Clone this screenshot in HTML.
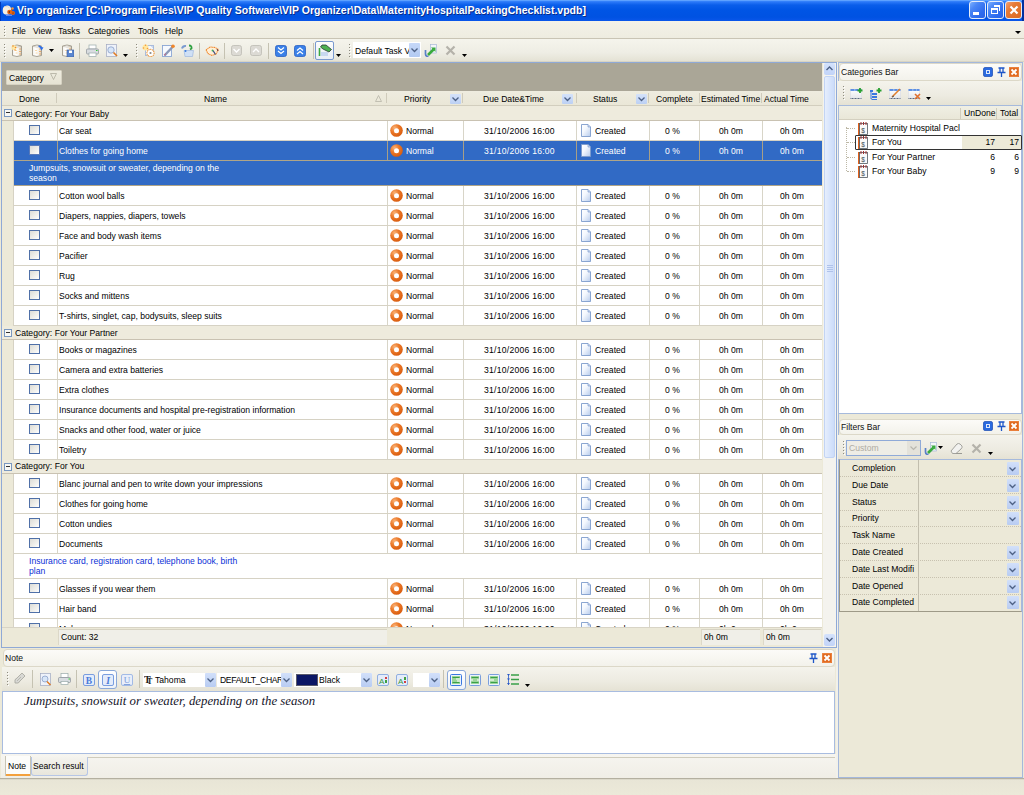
<!DOCTYPE html><html><head><meta charset="utf-8"><style>
*{margin:0;padding:0;box-sizing:border-box}
html,body{width:1024px;height:795px;overflow:hidden;background:#ECE9D8;font-family:"Liberation Sans",sans-serif;font-size:8.6px;color:#000}
.a{position:absolute}
.t{position:absolute;white-space:nowrap;line-height:10px}
</style></head><body>
<div class="a" style="left:0;top:0;width:1024px;height:21px;background:linear-gradient(#4A96FF 0px,#2A78F8 2px,#0A5EEA 5px,#0055E5 10px,#0052E2 17px,#0A56EA 21px)"></div>
<div class="a" style="left:0;top:0;width:1024px;height:1px;background:#5DA1FF"></div>
<div class="t" style="left:17px;top:4px;font-size:10.5px;font-weight:bold;color:#fff;line-height:13px;text-shadow:1px 1px 0 #0A2C8A">Vip organizer [C:\Program Files\VIP Quality Software\VIP Organizer\Data\MaternityHospitalPackingChecklist.vpdb]</div>
<svg class="a" style="left:1px;top:3px" width="15" height="14" viewBox="0 0 15 14"><path d="M2 5 Q3 2 7 2.5 Q10 3 10 6 L9 11 Q6 12.5 3 11 Q1 9 2 5Z" fill="#F4EEE2"/><path d="M4 3.5 Q7 3 8.5 5" stroke="#D8D2C4" stroke-width=".8" fill="none"/><rect x="5" y="11.5" width="6" height="1.5" fill="#6A8AE8"/><circle cx="8.5" cy="9" r="2.3" fill="#E8650F"/><circle cx="12" cy="10" r="2" fill="#E8650F"/><path d="M8.5 9 L12 10" stroke="#E8650F" stroke-width="2.5"/><circle cx="8.3" cy="9" r=".7" fill="#402010"/><circle cx="12" cy="10" r=".6" fill="#402010"/><circle cx="11.5" cy="5.5" r="1.3" fill="#F39A40"/><path d="M10 8 L11.5 6" stroke="#E8650F" stroke-width="1.2"/></svg>
<div class="a" style="left:969px;top:1px;width:17px;height:18px;border:1px solid #E4ECFA;border-radius:3px;background:linear-gradient(135deg,#7CB0FF 0%,#4A86F6 30%,#2F6CEE 70%,#2A62E4)"></div><div class="a" style="left:973px;top:12px;width:6px;height:3px;background:#fff"></div>
<div class="a" style="left:987px;top:1px;width:17px;height:18px;border:1px solid #E4ECFA;border-radius:3px;background:linear-gradient(135deg,#7CB0FF 0%,#4A86F6 30%,#2F6CEE 70%,#2A62E4)"></div><div class="a" style="left:994px;top:5px;width:6px;height:6px;border-top:2px solid #fff;border-right:1px solid #fff"></div><div class="a" style="left:991px;top:8px;width:7px;height:6px;border:1px solid #fff;border-top-width:2px"></div>
<div class="a" style="left:1005px;top:1px;width:17px;height:18px;border:1px solid #E4ECFA;border-radius:3px;background:linear-gradient(135deg,#F4A070 0%,#E67A36 35%,#DC6A22 100%)"></div><svg class="a" style="left:1009px;top:5px" width="10" height="10"><path d="M1.5 1.5L8.5 8.5M8.5 1.5L1.5 8.5" stroke="#fff" stroke-width="2.2"/></svg>
<div class="a" style="left:1022px;top:0;width:2px;height:21px;background:#0030A0"></div>
<div class="a" style="left:0;top:2px;width:1px;height:19px;background:#0038B8"></div>
<div class="a" style="left:0;top:21px;width:1024px;height:17px;background:linear-gradient(#F4F2E8,#EEECE0)"></div>
<div class="a" style="left:0;top:38px;width:1024px;height:1px;background:#C9C4B4"></div>
<div class="t" style="left:12px;top:26px">File</div>
<div class="t" style="left:33px;top:26px">View</div>
<div class="t" style="left:58px;top:26px">Tasks</div>
<div class="t" style="left:88px;top:26px">Categories</div>
<div class="t" style="left:138px;top:26px">Tools</div>
<div class="t" style="left:165px;top:26px">Help</div>
<svg class="a" style="left:1015px;top:31px" width="6" height="4"><path d="M0 0H6L3 3Z" fill="#000"/></svg>
<div class="a" style="left:0;top:39px;width:1024px;height:23px;background:linear-gradient(#F5F4EC,#EEEDE4 60%,#E3E1D3)"></div>
<div class="a" style="left:0;top:61px;width:1024px;height:1px;background:#D8D4C4"></div>
<div class="a" style="left:4px;top:26px;width:1px;height:1px;background:#8E8C80;box-shadow:1px 1px 0 #FFFFFF"></div><div class="a" style="left:4px;top:29px;width:1px;height:1px;background:#8E8C80;box-shadow:1px 1px 0 #FFFFFF"></div><div class="a" style="left:4px;top:32px;width:1px;height:1px;background:#8E8C80;box-shadow:1px 1px 0 #FFFFFF"></div><div class="a" style="left:4px;top:35px;width:1px;height:1px;background:#8E8C80;box-shadow:1px 1px 0 #FFFFFF"></div>
<div class="a" style="left:4px;top:44px;width:1px;height:1px;background:#8E8C80;box-shadow:1px 1px 0 #FFFFFF"></div><div class="a" style="left:4px;top:47px;width:1px;height:1px;background:#8E8C80;box-shadow:1px 1px 0 #FFFFFF"></div><div class="a" style="left:4px;top:50px;width:1px;height:1px;background:#8E8C80;box-shadow:1px 1px 0 #FFFFFF"></div><div class="a" style="left:4px;top:53px;width:1px;height:1px;background:#8E8C80;box-shadow:1px 1px 0 #FFFFFF"></div><div class="a" style="left:4px;top:56px;width:1px;height:1px;background:#8E8C80;box-shadow:1px 1px 0 #FFFFFF"></div>
<svg class="a" style="left:11px;top:44px" width="13" height="13" viewBox="0 0 13 13"><defs><linearGradient id="dbg" x1="0" x2="1"><stop offset="0" stop-color="#F2F0EA"/><stop offset=".35" stop-color="#FFFFFF"/><stop offset=".75" stop-color="#F2EEE4"/><stop offset="1" stop-color="#C8C4B8"/></linearGradient></defs><path d="M1.5 2 Q6 0 10.5 2 V11.5 Q6 13.5 1.5 11.5Z" fill="url(#dbg)" stroke="#9E988A" stroke-width=".9"/><path d="M1.8 2.3 Q6 4 10.2 2.3" stroke="#B8B2A4" stroke-width=".6" fill="none"/><path d="M9 4.5V5.5M9 7V8M9 9.5V10.5" stroke="#F08A2A" stroke-width="1.2"/><path d="M4 6.5H6M4.5 9H6.5" stroke="#F8D8A8" stroke-width="1"/><circle cx="3" cy="3.5" r="2.6" fill="#FFE8A0" opacity=".9"/><circle cx="2" cy="2" r=".8" fill="#F08A2A"/><circle cx="4.5" cy="3.5" r=".8" fill="#F08A2A"/><circle cx="4" cy="6" r=".7" fill="#F08A2A"/></svg>
<svg class="a" style="left:31px;top:44px" width="13" height="13" viewBox="0 0 13 13"><defs><linearGradient id="dbg" x1="0" x2="1"><stop offset="0" stop-color="#F2F0EA"/><stop offset=".35" stop-color="#FFFFFF"/><stop offset=".75" stop-color="#F2EEE4"/><stop offset="1" stop-color="#C8C4B8"/></linearGradient></defs><path d="M1.5 2 Q6 0 10.5 2 V11.5 Q6 13.5 1.5 11.5Z" fill="url(#dbg)" stroke="#9E988A" stroke-width=".9"/><path d="M1.8 2.3 Q6 4 10.2 2.3" stroke="#B8B2A4" stroke-width=".6" fill="none"/><path d="M9 4.5V5.5M9 7V8M9 9.5V10.5" stroke="#F08A2A" stroke-width="1.2"/><path d="M4 6.5H6M4.5 9H6.5" stroke="#F8D8A8" stroke-width="1"/><path d="M7.5 1.5 Q10 1 10.5 3 L12.5 3.5 L10.5 6.5 L9 4 Q8.5 3 7.5 3Z" fill="#2E6FE8"/></svg>
<svg class="a" style="left:49px;top:49px" width="5" height="3" viewBox="0 0 5 3"><path d="M0 0H5L2.5 3Z" fill="#000"/></svg>
<svg class="a" style="left:61px;top:44px" width="13" height="13" viewBox="0 0 13 13"><defs><linearGradient id="dbg" x1="0" x2="1"><stop offset="0" stop-color="#F2F0EA"/><stop offset=".35" stop-color="#FFFFFF"/><stop offset=".75" stop-color="#F2EEE4"/><stop offset="1" stop-color="#C8C4B8"/></linearGradient></defs><path d="M1.5 2 Q6 0 10.5 2 V11.5 Q6 13.5 1.5 11.5Z" fill="url(#dbg)" stroke="#9E988A" stroke-width=".9"/><path d="M1.8 2.3 Q6 4 10.2 2.3" stroke="#B8B2A4" stroke-width=".6" fill="none"/><path d="M9 4.5V5.5M9 7V8M9 9.5V10.5" stroke="#F08A2A" stroke-width="1.2"/><path d="M4 6.5H6M4.5 9H6.5" stroke="#F8D8A8" stroke-width="1"/><rect x="6" y="6" width="7" height="7" fill="#5A86D0" stroke="#3A5A9A" stroke-width=".6"/><rect x="8" y="6.5" width="3" height="2.5" fill="#fff"/></svg>
<div class="a" style="left:79px;top:43px;width:1px;height:16px;background:#C5C2B2"></div>
<svg class="a" style="left:86px;top:44px" width="13" height="13" viewBox="0 0 13 13"><rect x="3" y="1" width="7" height="4" fill="#fff" stroke="#9AA" stroke-width=".7"/><rect x="0.5" y="5" width="12" height="5" rx="1" fill="#D8DCE0" stroke="#8A9098" stroke-width=".7"/><rect x="3" y="9" width="7" height="3.5" fill="#fff" stroke="#9AA" stroke-width=".7"/><rect x="10" y="6" width="1.5" height="1" fill="#3C3"/></svg>
<svg class="a" style="left:106px;top:44px" width="12" height="13" viewBox="0 0 12 13"><rect x="0.5" y="0.5" width="10" height="12" fill="#EEF2FA" stroke="#A0A8C0" stroke-width=".7"/><circle cx="5" cy="6" r="3.2" fill="#D8E6F8" stroke="#8AA0C8" stroke-width=".8"/><path d="M7.5 8.5 L11 12" stroke="#E07A20" stroke-width="1.6"/></svg>
<svg class="a" style="left:123px;top:54px" width="5" height="3" viewBox="0 0 5 3"><path d="M0 0H5L2.5 3Z" fill="#000"/></svg>
<div class="a" style="left:136px;top:44px;width:1px;height:1px;background:#8E8C80;box-shadow:1px 1px 0 #FFFFFF"></div><div class="a" style="left:136px;top:47px;width:1px;height:1px;background:#8E8C80;box-shadow:1px 1px 0 #FFFFFF"></div><div class="a" style="left:136px;top:50px;width:1px;height:1px;background:#8E8C80;box-shadow:1px 1px 0 #FFFFFF"></div><div class="a" style="left:136px;top:53px;width:1px;height:1px;background:#8E8C80;box-shadow:1px 1px 0 #FFFFFF"></div><div class="a" style="left:136px;top:56px;width:1px;height:1px;background:#8E8C80;box-shadow:1px 1px 0 #FFFFFF"></div>
<svg class="a" style="left:142px;top:44px" width="14" height="13" viewBox="0 0 14 13"><rect x="3.5" y="1.5" width="8" height="10" fill="#F4F8FE" stroke="#9AB0D8" stroke-width=".8"/><path d="M9 1.5L11.5 4" stroke="#9AB0D8" stroke-width=".8"/><circle cx="3.5" cy="3.5" r="3" fill="#FFE7A0"/><circle cx="1.5" cy="4" r=".8" fill="#F39A3A"/><circle cx="3.5" cy="1.3" r=".8" fill="#F39A3A"/><circle cx="5.5" cy="4.5" r=".8" fill="#F39A3A"/><circle cx="8.5" cy="9" r="3.6" fill="#fff" stroke="#F0983A" stroke-width="1.1" stroke-dasharray="1.2 .6"/><circle cx="8.5" cy="9" r="1.1" fill="#8A8A8A"/></svg>
<svg class="a" style="left:161px;top:44px" width="14" height="13" viewBox="0 0 14 13"><rect x="1.5" y="1.5" width="9" height="11" fill="#F6F9FE" stroke="#8AA6D4" stroke-width=".9"/><path d="M3.5 11.5 L11.5 3" stroke="#8A98B8" stroke-width="2.4"/><path d="M3.5 11.5 L4.5 9.5" stroke="#D06080" stroke-width="1"/><circle cx="12" cy="2.3" r="1.8" fill="#F0862A"/></svg>
<svg class="a" style="left:181px;top:44px" width="14" height="13" viewBox="0 0 14 13"><path d="M1 4.5 Q2 1.5 5 2" stroke="#7A9AD0" stroke-width="2" fill="none"/><path d="M8 1.5 Q11 1.5 10.5 4.5 L9 5.5" stroke="#2EA040" stroke-width="1.8" fill="none"/><path d="M3 6.5 H12.5 L11.5 12.5 H4Z" fill="#CFE0F6" stroke="#9DB8E0" stroke-width=".7"/><circle cx="4.5" cy="7" r="1" fill="#3A7AE0"/></svg>
<div class="a" style="left:199px;top:43px;width:1px;height:16px;background:#C5C2B2"></div>
<svg class="a" style="left:205px;top:46px" width="14" height="10" viewBox="0 0 14 10"><path d="M1 4 L5 1 L10 1.5 L13.5 3.5 L11 8 L7 9.5 L3 7.5Z" fill="#FFF0D8" stroke="#F08A30" stroke-width="1.1" stroke-dasharray="1.3 .5"/><path d="M8 4.5 L10.5 8.5" stroke="#3A4A80" stroke-width="1.2"/><circle cx="7.5" cy="4.5" r=".9" fill="#40B060"/><path d="M12 3 L13 5" stroke="#603040" stroke-width="1"/></svg>
<div class="a" style="left:224px;top:43px;width:1px;height:16px;background:#C5C2B2"></div>
<svg class="a" style="left:231px;top:45px" width="11" height="11" viewBox="0 0 11 11"><rect x="0.5" y="0.5" width="10" height="10" rx="2" fill="#DCDAD4" stroke="#BDBBB4" stroke-width=".8"/><path d="M2.5 4 L5.5 7 L8.5 4" stroke="#fff" stroke-width="1.4" fill="none"/></svg>
<svg class="a" style="left:250px;top:45px" width="12" height="11" viewBox="0 0 12 11"><rect x="0.5" y="0.5" width="11" height="10" rx="2" fill="#DCDAD4" stroke="#BDBBB4" stroke-width=".8"/><path d="M3 7 L6 4 L9 7" stroke="#fff" stroke-width="1.4" fill="none"/></svg>
<div class="a" style="left:268px;top:43px;width:1px;height:16px;background:#C5C2B2"></div>
<svg class="a" style="left:275px;top:45px" width="12" height="12" viewBox="0 0 12 12"><rect x="0.5" y="0.5" width="11" height="11" rx="2" fill="#3A80E8" stroke="#2A60C0" stroke-width=".8"/><path d="M3 2.5L6 5L9 2.5M3 6L6 8.5L9 6" stroke="#fff" stroke-width="1.2" fill="none"/></svg>
<svg class="a" style="left:294px;top:45px" width="12" height="12" viewBox="0 0 12 12"><rect x="0.5" y="0.5" width="11" height="11" rx="2" fill="#3A80E8" stroke="#2A60C0" stroke-width=".8"/><path d="M3 5.5L6 3L9 5.5M3 9L6 6.5L9 9" stroke="#fff" stroke-width="1.2" fill="none"/></svg>
<div class="a" style="left:313px;top:43px;width:1px;height:16px;background:#C5C2B2"></div>
<div class="a" style="left:315px;top:41px;width:19px;height:19px;border:1px solid #7A9AD0;border-radius:2px;background:linear-gradient(#FDFDFB,#E8EEF6)"></div>
<svg class="a" style="left:318px;top:44px" width="14" height="13" viewBox="0 0 14 13"><rect x="3" y="8" width="7" height="4" fill="#C8D8F0"/><path d="M1.5 4V12" stroke="#3AA840" stroke-width="1.6"/><path d="M2.5 3 L4 1 H8 L13.5 5.5 L11 8 L8 6.5 L5 5Z" fill="#4CB050" stroke="#2A3A30" stroke-width=".8"/></svg>
<svg class="a" style="left:336px;top:54px" width="5" height="3" viewBox="0 0 5 3"><path d="M0 0H5L2.5 3Z" fill="#000"/></svg>
<div class="a" style="left:349px;top:44px;width:1px;height:1px;background:#8E8C80;box-shadow:1px 1px 0 #FFFFFF"></div><div class="a" style="left:349px;top:47px;width:1px;height:1px;background:#8E8C80;box-shadow:1px 1px 0 #FFFFFF"></div><div class="a" style="left:349px;top:50px;width:1px;height:1px;background:#8E8C80;box-shadow:1px 1px 0 #FFFFFF"></div><div class="a" style="left:349px;top:53px;width:1px;height:1px;background:#8E8C80;box-shadow:1px 1px 0 #FFFFFF"></div><div class="a" style="left:349px;top:56px;width:1px;height:1px;background:#8E8C80;box-shadow:1px 1px 0 #FFFFFF"></div>
<div class="a" style="left:353px;top:42px;width:68px;height:16px;background:#fff;border:1px solid #fff"></div>
<div class="t" style="left:355px;top:46px;width:54px;overflow:hidden">Default Task View</div>
<div class="a" style="left:409px;top:43px;width:11px;height:14px;background:linear-gradient(#C6D8F8,#B2CAF2);border-radius:1px"></div>
<svg class="a" style="left:411px;top:48px" width="7" height="5" viewBox="0 0 7 5"><path d="M0.5 0.5L3.5 3.5L6.5 0.5" stroke="#4D6185" stroke-width="1.3" fill="none"/></svg>
<svg class="a" style="left:424px;top:44px" width="14" height="13" viewBox="0 0 14 13"><rect x="6.5" y=".5" width="6" height="8.5" fill="#F2F5FA" stroke="#A8B8D8" stroke-width=".7"/><path d="M1.5 6V10Q1.5 12.5 4.5 12.5" stroke="#5A80C8" stroke-width="1.7" fill="none"/><path d="M4 11L9.5 5.5" stroke="#3AAA40" stroke-width="2.6"/><path d="M7 3.5H11.5V8Z" fill="#3AAA40"/></svg>
<svg class="a" style="left:445px;top:45px" width="11" height="11" viewBox="0 0 11 11"><path d="M1.5 1.5L9.5 9.5M9.5 1.5L1.5 9.5" stroke="#B4B2AA" stroke-width="2.2"/></svg>
<svg class="a" style="left:462px;top:54px" width="5" height="3" viewBox="0 0 5 3"><path d="M0 0H5L2.5 3Z" fill="#000"/></svg>
<div class="a" style="left:836px;top:62px;width:2px;height:716px;background:#F2F1EA"></div>
<div class="a" style="left:1px;top:62px;width:836px;height:586px;border:1px solid #8FA9D6;background:#ECE9D8"></div>
<div class="a" style="left:2px;top:63px;width:820px;height:28px;background:#AAA697"></div>
<div class="a" style="left:6px;top:70px;width:56px;height:15px;background:linear-gradient(#EEECDF,#E6E3D4);border:1px solid #D6D2C2;border-radius:1px"></div>
<div class="t" style="left:9px;top:73px">Category</div>
<svg class="a" style="left:50px;top:73px" width="7" height="7" viewBox="0 0 7 7"><path d="M0.5 0.5H6.5L3.5 6.5Z" fill="none" stroke="#B0AD9E" stroke-width=".8"/></svg>
<div class="a" style="left:2px;top:91px;width:820px;height:15px;background:linear-gradient(#EEECDF,#EAE7D7);border-bottom:1px solid #D2CEBE"></div>
<div class="a" style="left:56px;top:93px;width:1px;height:10px;background:#CFCBBB"></div>
<div class="a" style="left:386px;top:93px;width:1px;height:10px;background:#CFCBBB"></div>
<div class="a" style="left:462px;top:93px;width:1px;height:10px;background:#CFCBBB"></div>
<div class="a" style="left:576px;top:93px;width:1px;height:10px;background:#CFCBBB"></div>
<div class="a" style="left:648px;top:93px;width:1px;height:10px;background:#CFCBBB"></div>
<div class="a" style="left:699px;top:93px;width:1px;height:10px;background:#CFCBBB"></div>
<div class="a" style="left:761px;top:93px;width:1px;height:10px;background:#CFCBBB"></div>
<div class="t" style="left:19px;top:94px">Done</div>
<div class="t" style="left:204px;top:94px">Name</div>
<div class="t" style="left:404px;top:94px">Priority</div>
<div class="t" style="left:483px;top:94px">Due Date&amp;Time</div>
<div class="t" style="left:593px;top:94px">Status</div>
<div class="t" style="left:656px;top:94px">Complete</div>
<div class="t" style="left:701px;top:94px">Estimated Time</div>
<div class="t" style="left:764px;top:94px">Actual Time</div>
<svg class="a" style="left:375px;top:95px" width="7" height="7" viewBox="0 0 7 7"><path d="M3.5 0.5L6.5 6.5H0.5Z" fill="none" stroke="#B8B5A8" stroke-width=".8"/></svg>
<div class="a" style="left:450px;top:94px;width:11px;height:10px;background:linear-gradient(#D4E2FA,#BCD0F4);border-radius:1px"></div><svg class="a" style="left:452px;top:97px" width="7" height="5" viewBox="0 0 7 5"><path d="M0.5 0.5L3.5 3.5L6.5 0.5" stroke="#4D6185" stroke-width="1.3" fill="none"/></svg>
<div class="a" style="left:562px;top:94px;width:11px;height:10px;background:linear-gradient(#D4E2FA,#BCD0F4);border-radius:1px"></div><svg class="a" style="left:564px;top:97px" width="7" height="5" viewBox="0 0 7 5"><path d="M0.5 0.5L3.5 3.5L6.5 0.5" stroke="#4D6185" stroke-width="1.3" fill="none"/></svg>
<div class="a" style="left:636px;top:94px;width:11px;height:10px;background:linear-gradient(#D4E2FA,#BCD0F4);border-radius:1px"></div><svg class="a" style="left:638px;top:97px" width="7" height="5" viewBox="0 0 7 5"><path d="M0.5 0.5L3.5 3.5L6.5 0.5" stroke="#4D6185" stroke-width="1.3" fill="none"/></svg>
<div class="a" style="left:2px;top:105px;width:820px;height:522px;overflow:hidden">
<div class="a" style="left:-2px;top:-104px;width:1024px;height:795px">
<div class="a" style="left:2px;top:105px;width:820px;height:15px;background:#EEEBDD"></div><div class="a" style="left:2px;top:119px;width:820px;height:1px;background:#C9C2B2"></div><div class="a" style="left:4px;top:108px;width:8px;height:8px;border:1px solid #7A98C0;background:#F8F8F4"></div><div class="a" style="left:6px;top:111px;width:4px;height:1px;background:#333"></div><div class="t" style="left:15px;top:108px">Category: For Your Baby</div>
<div class="a" style="left:13px;top:120px;width:809px;height:19px;background:#fff"></div><div class="a" style="left:13px;top:139px;width:809px;height:1px;background:#D6D2C4"></div><div class="a" style="left:57px;top:120px;width:1px;height:19px;background:#D8D5C8"></div><div class="a" style="left:387px;top:120px;width:1px;height:19px;background:#D8D5C8"></div><div class="a" style="left:463px;top:120px;width:1px;height:19px;background:#D8D5C8"></div><div class="a" style="left:576px;top:120px;width:1px;height:19px;background:#D8D5C8"></div><div class="a" style="left:649px;top:120px;width:1px;height:19px;background:#D8D5C8"></div><div class="a" style="left:699px;top:120px;width:1px;height:19px;background:#D8D5C8"></div><div class="a" style="left:762px;top:120px;width:1px;height:19px;background:#D8D5C8"></div><div class="a" style="left:13px;top:120px;width:1px;height:20px;background:#D6D2C4"></div><div class="a" style="left:29px;top:124px;width:11px;height:10px;border:1px solid #4F70A8;background:linear-gradient(135deg,#DCDCD6,#F3F3F0 70%,#fff)"></div><div class="t" style="left:59px;top:125px;color:#000">Car seat</div><svg class="a" style="left:390px;top:123px" width="13" height="13" viewBox="0 0 13 13"><defs><radialGradient id="pg" cx="35%" cy="30%" r="75%"><stop offset="0" stop-color="#F9B47A"/><stop offset=".45" stop-color="#EC7A2A"/><stop offset="1" stop-color="#D85A0C"/></radialGradient></defs><circle cx="6.5" cy="6.5" r="6.3" fill="url(#pg)"/><circle cx="6.5" cy="6.7" r="2.5" fill="#fff"/></svg><div class="t" style="left:406px;top:125px;color:#000">Normal</div><div class="t" style="left:484px;top:125px;color:#000;letter-spacing:.25px">31/10/2006 16:00</div><svg class="a" style="left:581px;top:123px" width="10" height="13" viewBox="0 0 10 13"><defs><linearGradient id="dg" x1="0" y1="0" x2="1" y2="1"><stop offset="0" stop-color="#FFFFFF"/><stop offset=".4" stop-color="#F4F8FE"/><stop offset="1" stop-color="#B8CCEC"/></linearGradient></defs><path d="M0.5 0.5H7L9.5 3V12.5H0.5Z" fill="url(#dg)" stroke="#7E9CCC" stroke-width=".9"/><path d="M7 0.5V3H9.5" fill="#C8D8F0" stroke="#7E9CCC" stroke-width=".7"/></svg><div class="t" style="left:595px;top:125px;color:#000">Created</div><div class="t" style="left:665px;top:125px;color:#000">0 %</div><div class="t" style="left:719px;top:125px;color:#000">0h 0m</div><div class="t" style="left:780px;top:125px;color:#000">0h 0m</div>
<div class="a" style="left:13px;top:140px;width:809px;height:19px;background:#316AC5"></div><div class="a" style="left:13px;top:159px;width:809px;height:1px;background:#B0A587"></div><div class="a" style="left:57px;top:140px;width:1px;height:19px;background:#A89F86"></div><div class="a" style="left:387px;top:140px;width:1px;height:19px;background:#A89F86"></div><div class="a" style="left:463px;top:140px;width:1px;height:19px;background:#A89F86"></div><div class="a" style="left:576px;top:140px;width:1px;height:19px;background:#A89F86"></div><div class="a" style="left:649px;top:140px;width:1px;height:19px;background:#A89F86"></div><div class="a" style="left:699px;top:140px;width:1px;height:19px;background:#A89F86"></div><div class="a" style="left:762px;top:140px;width:1px;height:19px;background:#A89F86"></div><div class="a" style="left:13px;top:140px;width:1px;height:20px;background:#D6D2C4"></div><div class="a" style="left:29px;top:144px;width:11px;height:10px;border:1px solid #5A7AB8;background:linear-gradient(135deg,#DCDCD6,#F3F3F0 70%,#fff)"></div><div class="t" style="left:59px;top:145px;color:#fff">Clothes for going home</div><svg class="a" style="left:390px;top:143px" width="13" height="13" viewBox="0 0 13 13"><defs><radialGradient id="pg" cx="35%" cy="30%" r="75%"><stop offset="0" stop-color="#F9B47A"/><stop offset=".45" stop-color="#EC7A2A"/><stop offset="1" stop-color="#D85A0C"/></radialGradient></defs><circle cx="6.5" cy="6.5" r="6.3" fill="url(#pg)"/><circle cx="6.5" cy="6.7" r="2.5" fill="#fff"/></svg><div class="t" style="left:406px;top:145px;color:#fff">Normal</div><div class="t" style="left:484px;top:145px;color:#fff;letter-spacing:.25px">31/10/2006 16:00</div><svg class="a" style="left:581px;top:143px" width="10" height="13" viewBox="0 0 10 13"><defs><linearGradient id="dg" x1="0" y1="0" x2="1" y2="1"><stop offset="0" stop-color="#FFFFFF"/><stop offset=".4" stop-color="#F4F8FE"/><stop offset="1" stop-color="#B8CCEC"/></linearGradient></defs><path d="M0.5 0.5H7L9.5 3V12.5H0.5Z" fill="url(#dg)" stroke="#7E9CCC" stroke-width=".9"/><path d="M7 0.5V3H9.5" fill="#C8D8F0" stroke="#7E9CCC" stroke-width=".7"/></svg><div class="t" style="left:595px;top:145px;color:#fff">Created</div><div class="t" style="left:665px;top:145px;color:#fff">0 %</div><div class="t" style="left:719px;top:145px;color:#fff">0h 0m</div><div class="t" style="left:780px;top:145px;color:#fff">0h 0m</div>
<div class="a" style="left:13px;top:160px;width:809px;height:24px;background:#316AC5"></div><div class="a" style="left:13px;top:184px;width:809px;height:1px;background:#B0A587"></div><div class="a" style="left:13px;top:160px;width:1px;height:25px;background:#D6D2C4"></div><div class="t" style="left:29px;top:162px;color:#fff;line-height:10px">Jumpsuits, snowsuit or sweater, depending on the<br>season</div>
<div class="a" style="left:13px;top:185px;width:809px;height:19px;background:#fff"></div><div class="a" style="left:13px;top:204px;width:809px;height:1px;background:#D6D2C4"></div><div class="a" style="left:57px;top:185px;width:1px;height:19px;background:#D8D5C8"></div><div class="a" style="left:387px;top:185px;width:1px;height:19px;background:#D8D5C8"></div><div class="a" style="left:463px;top:185px;width:1px;height:19px;background:#D8D5C8"></div><div class="a" style="left:576px;top:185px;width:1px;height:19px;background:#D8D5C8"></div><div class="a" style="left:649px;top:185px;width:1px;height:19px;background:#D8D5C8"></div><div class="a" style="left:699px;top:185px;width:1px;height:19px;background:#D8D5C8"></div><div class="a" style="left:762px;top:185px;width:1px;height:19px;background:#D8D5C8"></div><div class="a" style="left:13px;top:185px;width:1px;height:20px;background:#D6D2C4"></div><div class="a" style="left:29px;top:189px;width:11px;height:10px;border:1px solid #4F70A8;background:linear-gradient(135deg,#DCDCD6,#F3F3F0 70%,#fff)"></div><div class="t" style="left:59px;top:190px;color:#000">Cotton wool balls</div><svg class="a" style="left:390px;top:188px" width="13" height="13" viewBox="0 0 13 13"><defs><radialGradient id="pg" cx="35%" cy="30%" r="75%"><stop offset="0" stop-color="#F9B47A"/><stop offset=".45" stop-color="#EC7A2A"/><stop offset="1" stop-color="#D85A0C"/></radialGradient></defs><circle cx="6.5" cy="6.5" r="6.3" fill="url(#pg)"/><circle cx="6.5" cy="6.7" r="2.5" fill="#fff"/></svg><div class="t" style="left:406px;top:190px;color:#000">Normal</div><div class="t" style="left:484px;top:190px;color:#000;letter-spacing:.25px">31/10/2006 16:00</div><svg class="a" style="left:581px;top:188px" width="10" height="13" viewBox="0 0 10 13"><defs><linearGradient id="dg" x1="0" y1="0" x2="1" y2="1"><stop offset="0" stop-color="#FFFFFF"/><stop offset=".4" stop-color="#F4F8FE"/><stop offset="1" stop-color="#B8CCEC"/></linearGradient></defs><path d="M0.5 0.5H7L9.5 3V12.5H0.5Z" fill="url(#dg)" stroke="#7E9CCC" stroke-width=".9"/><path d="M7 0.5V3H9.5" fill="#C8D8F0" stroke="#7E9CCC" stroke-width=".7"/></svg><div class="t" style="left:595px;top:190px;color:#000">Created</div><div class="t" style="left:665px;top:190px;color:#000">0 %</div><div class="t" style="left:719px;top:190px;color:#000">0h 0m</div><div class="t" style="left:780px;top:190px;color:#000">0h 0m</div>
<div class="a" style="left:13px;top:205px;width:809px;height:19px;background:#fff"></div><div class="a" style="left:13px;top:224px;width:809px;height:1px;background:#D6D2C4"></div><div class="a" style="left:57px;top:205px;width:1px;height:19px;background:#D8D5C8"></div><div class="a" style="left:387px;top:205px;width:1px;height:19px;background:#D8D5C8"></div><div class="a" style="left:463px;top:205px;width:1px;height:19px;background:#D8D5C8"></div><div class="a" style="left:576px;top:205px;width:1px;height:19px;background:#D8D5C8"></div><div class="a" style="left:649px;top:205px;width:1px;height:19px;background:#D8D5C8"></div><div class="a" style="left:699px;top:205px;width:1px;height:19px;background:#D8D5C8"></div><div class="a" style="left:762px;top:205px;width:1px;height:19px;background:#D8D5C8"></div><div class="a" style="left:13px;top:205px;width:1px;height:20px;background:#D6D2C4"></div><div class="a" style="left:29px;top:209px;width:11px;height:10px;border:1px solid #4F70A8;background:linear-gradient(135deg,#DCDCD6,#F3F3F0 70%,#fff)"></div><div class="t" style="left:59px;top:210px;color:#000">Diapers, nappies, diapers, towels</div><svg class="a" style="left:390px;top:208px" width="13" height="13" viewBox="0 0 13 13"><defs><radialGradient id="pg" cx="35%" cy="30%" r="75%"><stop offset="0" stop-color="#F9B47A"/><stop offset=".45" stop-color="#EC7A2A"/><stop offset="1" stop-color="#D85A0C"/></radialGradient></defs><circle cx="6.5" cy="6.5" r="6.3" fill="url(#pg)"/><circle cx="6.5" cy="6.7" r="2.5" fill="#fff"/></svg><div class="t" style="left:406px;top:210px;color:#000">Normal</div><div class="t" style="left:484px;top:210px;color:#000;letter-spacing:.25px">31/10/2006 16:00</div><svg class="a" style="left:581px;top:208px" width="10" height="13" viewBox="0 0 10 13"><defs><linearGradient id="dg" x1="0" y1="0" x2="1" y2="1"><stop offset="0" stop-color="#FFFFFF"/><stop offset=".4" stop-color="#F4F8FE"/><stop offset="1" stop-color="#B8CCEC"/></linearGradient></defs><path d="M0.5 0.5H7L9.5 3V12.5H0.5Z" fill="url(#dg)" stroke="#7E9CCC" stroke-width=".9"/><path d="M7 0.5V3H9.5" fill="#C8D8F0" stroke="#7E9CCC" stroke-width=".7"/></svg><div class="t" style="left:595px;top:210px;color:#000">Created</div><div class="t" style="left:665px;top:210px;color:#000">0 %</div><div class="t" style="left:719px;top:210px;color:#000">0h 0m</div><div class="t" style="left:780px;top:210px;color:#000">0h 0m</div>
<div class="a" style="left:13px;top:225px;width:809px;height:19px;background:#fff"></div><div class="a" style="left:13px;top:244px;width:809px;height:1px;background:#D6D2C4"></div><div class="a" style="left:57px;top:225px;width:1px;height:19px;background:#D8D5C8"></div><div class="a" style="left:387px;top:225px;width:1px;height:19px;background:#D8D5C8"></div><div class="a" style="left:463px;top:225px;width:1px;height:19px;background:#D8D5C8"></div><div class="a" style="left:576px;top:225px;width:1px;height:19px;background:#D8D5C8"></div><div class="a" style="left:649px;top:225px;width:1px;height:19px;background:#D8D5C8"></div><div class="a" style="left:699px;top:225px;width:1px;height:19px;background:#D8D5C8"></div><div class="a" style="left:762px;top:225px;width:1px;height:19px;background:#D8D5C8"></div><div class="a" style="left:13px;top:225px;width:1px;height:20px;background:#D6D2C4"></div><div class="a" style="left:29px;top:229px;width:11px;height:10px;border:1px solid #4F70A8;background:linear-gradient(135deg,#DCDCD6,#F3F3F0 70%,#fff)"></div><div class="t" style="left:59px;top:230px;color:#000">Face and body wash items</div><svg class="a" style="left:390px;top:228px" width="13" height="13" viewBox="0 0 13 13"><defs><radialGradient id="pg" cx="35%" cy="30%" r="75%"><stop offset="0" stop-color="#F9B47A"/><stop offset=".45" stop-color="#EC7A2A"/><stop offset="1" stop-color="#D85A0C"/></radialGradient></defs><circle cx="6.5" cy="6.5" r="6.3" fill="url(#pg)"/><circle cx="6.5" cy="6.7" r="2.5" fill="#fff"/></svg><div class="t" style="left:406px;top:230px;color:#000">Normal</div><div class="t" style="left:484px;top:230px;color:#000;letter-spacing:.25px">31/10/2006 16:00</div><svg class="a" style="left:581px;top:228px" width="10" height="13" viewBox="0 0 10 13"><defs><linearGradient id="dg" x1="0" y1="0" x2="1" y2="1"><stop offset="0" stop-color="#FFFFFF"/><stop offset=".4" stop-color="#F4F8FE"/><stop offset="1" stop-color="#B8CCEC"/></linearGradient></defs><path d="M0.5 0.5H7L9.5 3V12.5H0.5Z" fill="url(#dg)" stroke="#7E9CCC" stroke-width=".9"/><path d="M7 0.5V3H9.5" fill="#C8D8F0" stroke="#7E9CCC" stroke-width=".7"/></svg><div class="t" style="left:595px;top:230px;color:#000">Created</div><div class="t" style="left:665px;top:230px;color:#000">0 %</div><div class="t" style="left:719px;top:230px;color:#000">0h 0m</div><div class="t" style="left:780px;top:230px;color:#000">0h 0m</div>
<div class="a" style="left:13px;top:245px;width:809px;height:19px;background:#fff"></div><div class="a" style="left:13px;top:264px;width:809px;height:1px;background:#D6D2C4"></div><div class="a" style="left:57px;top:245px;width:1px;height:19px;background:#D8D5C8"></div><div class="a" style="left:387px;top:245px;width:1px;height:19px;background:#D8D5C8"></div><div class="a" style="left:463px;top:245px;width:1px;height:19px;background:#D8D5C8"></div><div class="a" style="left:576px;top:245px;width:1px;height:19px;background:#D8D5C8"></div><div class="a" style="left:649px;top:245px;width:1px;height:19px;background:#D8D5C8"></div><div class="a" style="left:699px;top:245px;width:1px;height:19px;background:#D8D5C8"></div><div class="a" style="left:762px;top:245px;width:1px;height:19px;background:#D8D5C8"></div><div class="a" style="left:13px;top:245px;width:1px;height:20px;background:#D6D2C4"></div><div class="a" style="left:29px;top:249px;width:11px;height:10px;border:1px solid #4F70A8;background:linear-gradient(135deg,#DCDCD6,#F3F3F0 70%,#fff)"></div><div class="t" style="left:59px;top:250px;color:#000">Pacifier</div><svg class="a" style="left:390px;top:248px" width="13" height="13" viewBox="0 0 13 13"><defs><radialGradient id="pg" cx="35%" cy="30%" r="75%"><stop offset="0" stop-color="#F9B47A"/><stop offset=".45" stop-color="#EC7A2A"/><stop offset="1" stop-color="#D85A0C"/></radialGradient></defs><circle cx="6.5" cy="6.5" r="6.3" fill="url(#pg)"/><circle cx="6.5" cy="6.7" r="2.5" fill="#fff"/></svg><div class="t" style="left:406px;top:250px;color:#000">Normal</div><div class="t" style="left:484px;top:250px;color:#000;letter-spacing:.25px">31/10/2006 16:00</div><svg class="a" style="left:581px;top:248px" width="10" height="13" viewBox="0 0 10 13"><defs><linearGradient id="dg" x1="0" y1="0" x2="1" y2="1"><stop offset="0" stop-color="#FFFFFF"/><stop offset=".4" stop-color="#F4F8FE"/><stop offset="1" stop-color="#B8CCEC"/></linearGradient></defs><path d="M0.5 0.5H7L9.5 3V12.5H0.5Z" fill="url(#dg)" stroke="#7E9CCC" stroke-width=".9"/><path d="M7 0.5V3H9.5" fill="#C8D8F0" stroke="#7E9CCC" stroke-width=".7"/></svg><div class="t" style="left:595px;top:250px;color:#000">Created</div><div class="t" style="left:665px;top:250px;color:#000">0 %</div><div class="t" style="left:719px;top:250px;color:#000">0h 0m</div><div class="t" style="left:780px;top:250px;color:#000">0h 0m</div>
<div class="a" style="left:13px;top:265px;width:809px;height:19px;background:#fff"></div><div class="a" style="left:13px;top:284px;width:809px;height:1px;background:#D6D2C4"></div><div class="a" style="left:57px;top:265px;width:1px;height:19px;background:#D8D5C8"></div><div class="a" style="left:387px;top:265px;width:1px;height:19px;background:#D8D5C8"></div><div class="a" style="left:463px;top:265px;width:1px;height:19px;background:#D8D5C8"></div><div class="a" style="left:576px;top:265px;width:1px;height:19px;background:#D8D5C8"></div><div class="a" style="left:649px;top:265px;width:1px;height:19px;background:#D8D5C8"></div><div class="a" style="left:699px;top:265px;width:1px;height:19px;background:#D8D5C8"></div><div class="a" style="left:762px;top:265px;width:1px;height:19px;background:#D8D5C8"></div><div class="a" style="left:13px;top:265px;width:1px;height:20px;background:#D6D2C4"></div><div class="a" style="left:29px;top:269px;width:11px;height:10px;border:1px solid #4F70A8;background:linear-gradient(135deg,#DCDCD6,#F3F3F0 70%,#fff)"></div><div class="t" style="left:59px;top:270px;color:#000">Rug</div><svg class="a" style="left:390px;top:268px" width="13" height="13" viewBox="0 0 13 13"><defs><radialGradient id="pg" cx="35%" cy="30%" r="75%"><stop offset="0" stop-color="#F9B47A"/><stop offset=".45" stop-color="#EC7A2A"/><stop offset="1" stop-color="#D85A0C"/></radialGradient></defs><circle cx="6.5" cy="6.5" r="6.3" fill="url(#pg)"/><circle cx="6.5" cy="6.7" r="2.5" fill="#fff"/></svg><div class="t" style="left:406px;top:270px;color:#000">Normal</div><div class="t" style="left:484px;top:270px;color:#000;letter-spacing:.25px">31/10/2006 16:00</div><svg class="a" style="left:581px;top:268px" width="10" height="13" viewBox="0 0 10 13"><defs><linearGradient id="dg" x1="0" y1="0" x2="1" y2="1"><stop offset="0" stop-color="#FFFFFF"/><stop offset=".4" stop-color="#F4F8FE"/><stop offset="1" stop-color="#B8CCEC"/></linearGradient></defs><path d="M0.5 0.5H7L9.5 3V12.5H0.5Z" fill="url(#dg)" stroke="#7E9CCC" stroke-width=".9"/><path d="M7 0.5V3H9.5" fill="#C8D8F0" stroke="#7E9CCC" stroke-width=".7"/></svg><div class="t" style="left:595px;top:270px;color:#000">Created</div><div class="t" style="left:665px;top:270px;color:#000">0 %</div><div class="t" style="left:719px;top:270px;color:#000">0h 0m</div><div class="t" style="left:780px;top:270px;color:#000">0h 0m</div>
<div class="a" style="left:13px;top:285px;width:809px;height:19px;background:#fff"></div><div class="a" style="left:13px;top:304px;width:809px;height:1px;background:#D6D2C4"></div><div class="a" style="left:57px;top:285px;width:1px;height:19px;background:#D8D5C8"></div><div class="a" style="left:387px;top:285px;width:1px;height:19px;background:#D8D5C8"></div><div class="a" style="left:463px;top:285px;width:1px;height:19px;background:#D8D5C8"></div><div class="a" style="left:576px;top:285px;width:1px;height:19px;background:#D8D5C8"></div><div class="a" style="left:649px;top:285px;width:1px;height:19px;background:#D8D5C8"></div><div class="a" style="left:699px;top:285px;width:1px;height:19px;background:#D8D5C8"></div><div class="a" style="left:762px;top:285px;width:1px;height:19px;background:#D8D5C8"></div><div class="a" style="left:13px;top:285px;width:1px;height:20px;background:#D6D2C4"></div><div class="a" style="left:29px;top:289px;width:11px;height:10px;border:1px solid #4F70A8;background:linear-gradient(135deg,#DCDCD6,#F3F3F0 70%,#fff)"></div><div class="t" style="left:59px;top:290px;color:#000">Socks and mittens</div><svg class="a" style="left:390px;top:288px" width="13" height="13" viewBox="0 0 13 13"><defs><radialGradient id="pg" cx="35%" cy="30%" r="75%"><stop offset="0" stop-color="#F9B47A"/><stop offset=".45" stop-color="#EC7A2A"/><stop offset="1" stop-color="#D85A0C"/></radialGradient></defs><circle cx="6.5" cy="6.5" r="6.3" fill="url(#pg)"/><circle cx="6.5" cy="6.7" r="2.5" fill="#fff"/></svg><div class="t" style="left:406px;top:290px;color:#000">Normal</div><div class="t" style="left:484px;top:290px;color:#000;letter-spacing:.25px">31/10/2006 16:00</div><svg class="a" style="left:581px;top:288px" width="10" height="13" viewBox="0 0 10 13"><defs><linearGradient id="dg" x1="0" y1="0" x2="1" y2="1"><stop offset="0" stop-color="#FFFFFF"/><stop offset=".4" stop-color="#F4F8FE"/><stop offset="1" stop-color="#B8CCEC"/></linearGradient></defs><path d="M0.5 0.5H7L9.5 3V12.5H0.5Z" fill="url(#dg)" stroke="#7E9CCC" stroke-width=".9"/><path d="M7 0.5V3H9.5" fill="#C8D8F0" stroke="#7E9CCC" stroke-width=".7"/></svg><div class="t" style="left:595px;top:290px;color:#000">Created</div><div class="t" style="left:665px;top:290px;color:#000">0 %</div><div class="t" style="left:719px;top:290px;color:#000">0h 0m</div><div class="t" style="left:780px;top:290px;color:#000">0h 0m</div>
<div class="a" style="left:13px;top:305px;width:809px;height:19px;background:#fff"></div><div class="a" style="left:13px;top:324px;width:809px;height:1px;background:#D6D2C4"></div><div class="a" style="left:57px;top:305px;width:1px;height:19px;background:#D8D5C8"></div><div class="a" style="left:387px;top:305px;width:1px;height:19px;background:#D8D5C8"></div><div class="a" style="left:463px;top:305px;width:1px;height:19px;background:#D8D5C8"></div><div class="a" style="left:576px;top:305px;width:1px;height:19px;background:#D8D5C8"></div><div class="a" style="left:649px;top:305px;width:1px;height:19px;background:#D8D5C8"></div><div class="a" style="left:699px;top:305px;width:1px;height:19px;background:#D8D5C8"></div><div class="a" style="left:762px;top:305px;width:1px;height:19px;background:#D8D5C8"></div><div class="a" style="left:13px;top:305px;width:1px;height:20px;background:#D6D2C4"></div><div class="a" style="left:29px;top:309px;width:11px;height:10px;border:1px solid #4F70A8;background:linear-gradient(135deg,#DCDCD6,#F3F3F0 70%,#fff)"></div><div class="t" style="left:59px;top:310px;color:#000">T-shirts, singlet, cap, bodysuits, sleep suits</div><svg class="a" style="left:390px;top:308px" width="13" height="13" viewBox="0 0 13 13"><defs><radialGradient id="pg" cx="35%" cy="30%" r="75%"><stop offset="0" stop-color="#F9B47A"/><stop offset=".45" stop-color="#EC7A2A"/><stop offset="1" stop-color="#D85A0C"/></radialGradient></defs><circle cx="6.5" cy="6.5" r="6.3" fill="url(#pg)"/><circle cx="6.5" cy="6.7" r="2.5" fill="#fff"/></svg><div class="t" style="left:406px;top:310px;color:#000">Normal</div><div class="t" style="left:484px;top:310px;color:#000;letter-spacing:.25px">31/10/2006 16:00</div><svg class="a" style="left:581px;top:308px" width="10" height="13" viewBox="0 0 10 13"><defs><linearGradient id="dg" x1="0" y1="0" x2="1" y2="1"><stop offset="0" stop-color="#FFFFFF"/><stop offset=".4" stop-color="#F4F8FE"/><stop offset="1" stop-color="#B8CCEC"/></linearGradient></defs><path d="M0.5 0.5H7L9.5 3V12.5H0.5Z" fill="url(#dg)" stroke="#7E9CCC" stroke-width=".9"/><path d="M7 0.5V3H9.5" fill="#C8D8F0" stroke="#7E9CCC" stroke-width=".7"/></svg><div class="t" style="left:595px;top:310px;color:#000">Created</div><div class="t" style="left:665px;top:310px;color:#000">0 %</div><div class="t" style="left:719px;top:310px;color:#000">0h 0m</div><div class="t" style="left:780px;top:310px;color:#000">0h 0m</div>
<div class="a" style="left:2px;top:325px;width:820px;height:14px;background:#EEEBDD"></div><div class="a" style="left:2px;top:338px;width:820px;height:1px;background:#C9C2B2"></div><div class="a" style="left:4px;top:328px;width:8px;height:8px;border:1px solid #7A98C0;background:#F8F8F4"></div><div class="a" style="left:6px;top:331px;width:4px;height:1px;background:#333"></div><div class="t" style="left:15px;top:327px">Category: For Your Partner</div>
<div class="a" style="left:13px;top:339px;width:809px;height:19px;background:#fff"></div><div class="a" style="left:13px;top:358px;width:809px;height:1px;background:#D6D2C4"></div><div class="a" style="left:57px;top:339px;width:1px;height:19px;background:#D8D5C8"></div><div class="a" style="left:387px;top:339px;width:1px;height:19px;background:#D8D5C8"></div><div class="a" style="left:463px;top:339px;width:1px;height:19px;background:#D8D5C8"></div><div class="a" style="left:576px;top:339px;width:1px;height:19px;background:#D8D5C8"></div><div class="a" style="left:649px;top:339px;width:1px;height:19px;background:#D8D5C8"></div><div class="a" style="left:699px;top:339px;width:1px;height:19px;background:#D8D5C8"></div><div class="a" style="left:762px;top:339px;width:1px;height:19px;background:#D8D5C8"></div><div class="a" style="left:13px;top:339px;width:1px;height:20px;background:#D6D2C4"></div><div class="a" style="left:29px;top:343px;width:11px;height:10px;border:1px solid #4F70A8;background:linear-gradient(135deg,#DCDCD6,#F3F3F0 70%,#fff)"></div><div class="t" style="left:59px;top:344px;color:#000">Books or magazines</div><svg class="a" style="left:390px;top:342px" width="13" height="13" viewBox="0 0 13 13"><defs><radialGradient id="pg" cx="35%" cy="30%" r="75%"><stop offset="0" stop-color="#F9B47A"/><stop offset=".45" stop-color="#EC7A2A"/><stop offset="1" stop-color="#D85A0C"/></radialGradient></defs><circle cx="6.5" cy="6.5" r="6.3" fill="url(#pg)"/><circle cx="6.5" cy="6.7" r="2.5" fill="#fff"/></svg><div class="t" style="left:406px;top:344px;color:#000">Normal</div><div class="t" style="left:484px;top:344px;color:#000;letter-spacing:.25px">31/10/2006 16:00</div><svg class="a" style="left:581px;top:342px" width="10" height="13" viewBox="0 0 10 13"><defs><linearGradient id="dg" x1="0" y1="0" x2="1" y2="1"><stop offset="0" stop-color="#FFFFFF"/><stop offset=".4" stop-color="#F4F8FE"/><stop offset="1" stop-color="#B8CCEC"/></linearGradient></defs><path d="M0.5 0.5H7L9.5 3V12.5H0.5Z" fill="url(#dg)" stroke="#7E9CCC" stroke-width=".9"/><path d="M7 0.5V3H9.5" fill="#C8D8F0" stroke="#7E9CCC" stroke-width=".7"/></svg><div class="t" style="left:595px;top:344px;color:#000">Created</div><div class="t" style="left:665px;top:344px;color:#000">0 %</div><div class="t" style="left:719px;top:344px;color:#000">0h 0m</div><div class="t" style="left:780px;top:344px;color:#000">0h 0m</div>
<div class="a" style="left:13px;top:359px;width:809px;height:19px;background:#fff"></div><div class="a" style="left:13px;top:378px;width:809px;height:1px;background:#D6D2C4"></div><div class="a" style="left:57px;top:359px;width:1px;height:19px;background:#D8D5C8"></div><div class="a" style="left:387px;top:359px;width:1px;height:19px;background:#D8D5C8"></div><div class="a" style="left:463px;top:359px;width:1px;height:19px;background:#D8D5C8"></div><div class="a" style="left:576px;top:359px;width:1px;height:19px;background:#D8D5C8"></div><div class="a" style="left:649px;top:359px;width:1px;height:19px;background:#D8D5C8"></div><div class="a" style="left:699px;top:359px;width:1px;height:19px;background:#D8D5C8"></div><div class="a" style="left:762px;top:359px;width:1px;height:19px;background:#D8D5C8"></div><div class="a" style="left:13px;top:359px;width:1px;height:20px;background:#D6D2C4"></div><div class="a" style="left:29px;top:363px;width:11px;height:10px;border:1px solid #4F70A8;background:linear-gradient(135deg,#DCDCD6,#F3F3F0 70%,#fff)"></div><div class="t" style="left:59px;top:364px;color:#000">Camera and extra batteries</div><svg class="a" style="left:390px;top:362px" width="13" height="13" viewBox="0 0 13 13"><defs><radialGradient id="pg" cx="35%" cy="30%" r="75%"><stop offset="0" stop-color="#F9B47A"/><stop offset=".45" stop-color="#EC7A2A"/><stop offset="1" stop-color="#D85A0C"/></radialGradient></defs><circle cx="6.5" cy="6.5" r="6.3" fill="url(#pg)"/><circle cx="6.5" cy="6.7" r="2.5" fill="#fff"/></svg><div class="t" style="left:406px;top:364px;color:#000">Normal</div><div class="t" style="left:484px;top:364px;color:#000;letter-spacing:.25px">31/10/2006 16:00</div><svg class="a" style="left:581px;top:362px" width="10" height="13" viewBox="0 0 10 13"><defs><linearGradient id="dg" x1="0" y1="0" x2="1" y2="1"><stop offset="0" stop-color="#FFFFFF"/><stop offset=".4" stop-color="#F4F8FE"/><stop offset="1" stop-color="#B8CCEC"/></linearGradient></defs><path d="M0.5 0.5H7L9.5 3V12.5H0.5Z" fill="url(#dg)" stroke="#7E9CCC" stroke-width=".9"/><path d="M7 0.5V3H9.5" fill="#C8D8F0" stroke="#7E9CCC" stroke-width=".7"/></svg><div class="t" style="left:595px;top:364px;color:#000">Created</div><div class="t" style="left:665px;top:364px;color:#000">0 %</div><div class="t" style="left:719px;top:364px;color:#000">0h 0m</div><div class="t" style="left:780px;top:364px;color:#000">0h 0m</div>
<div class="a" style="left:13px;top:379px;width:809px;height:19px;background:#fff"></div><div class="a" style="left:13px;top:398px;width:809px;height:1px;background:#D6D2C4"></div><div class="a" style="left:57px;top:379px;width:1px;height:19px;background:#D8D5C8"></div><div class="a" style="left:387px;top:379px;width:1px;height:19px;background:#D8D5C8"></div><div class="a" style="left:463px;top:379px;width:1px;height:19px;background:#D8D5C8"></div><div class="a" style="left:576px;top:379px;width:1px;height:19px;background:#D8D5C8"></div><div class="a" style="left:649px;top:379px;width:1px;height:19px;background:#D8D5C8"></div><div class="a" style="left:699px;top:379px;width:1px;height:19px;background:#D8D5C8"></div><div class="a" style="left:762px;top:379px;width:1px;height:19px;background:#D8D5C8"></div><div class="a" style="left:13px;top:379px;width:1px;height:20px;background:#D6D2C4"></div><div class="a" style="left:29px;top:383px;width:11px;height:10px;border:1px solid #4F70A8;background:linear-gradient(135deg,#DCDCD6,#F3F3F0 70%,#fff)"></div><div class="t" style="left:59px;top:384px;color:#000">Extra clothes</div><svg class="a" style="left:390px;top:382px" width="13" height="13" viewBox="0 0 13 13"><defs><radialGradient id="pg" cx="35%" cy="30%" r="75%"><stop offset="0" stop-color="#F9B47A"/><stop offset=".45" stop-color="#EC7A2A"/><stop offset="1" stop-color="#D85A0C"/></radialGradient></defs><circle cx="6.5" cy="6.5" r="6.3" fill="url(#pg)"/><circle cx="6.5" cy="6.7" r="2.5" fill="#fff"/></svg><div class="t" style="left:406px;top:384px;color:#000">Normal</div><div class="t" style="left:484px;top:384px;color:#000;letter-spacing:.25px">31/10/2006 16:00</div><svg class="a" style="left:581px;top:382px" width="10" height="13" viewBox="0 0 10 13"><defs><linearGradient id="dg" x1="0" y1="0" x2="1" y2="1"><stop offset="0" stop-color="#FFFFFF"/><stop offset=".4" stop-color="#F4F8FE"/><stop offset="1" stop-color="#B8CCEC"/></linearGradient></defs><path d="M0.5 0.5H7L9.5 3V12.5H0.5Z" fill="url(#dg)" stroke="#7E9CCC" stroke-width=".9"/><path d="M7 0.5V3H9.5" fill="#C8D8F0" stroke="#7E9CCC" stroke-width=".7"/></svg><div class="t" style="left:595px;top:384px;color:#000">Created</div><div class="t" style="left:665px;top:384px;color:#000">0 %</div><div class="t" style="left:719px;top:384px;color:#000">0h 0m</div><div class="t" style="left:780px;top:384px;color:#000">0h 0m</div>
<div class="a" style="left:13px;top:399px;width:809px;height:19px;background:#fff"></div><div class="a" style="left:13px;top:418px;width:809px;height:1px;background:#D6D2C4"></div><div class="a" style="left:57px;top:399px;width:1px;height:19px;background:#D8D5C8"></div><div class="a" style="left:387px;top:399px;width:1px;height:19px;background:#D8D5C8"></div><div class="a" style="left:463px;top:399px;width:1px;height:19px;background:#D8D5C8"></div><div class="a" style="left:576px;top:399px;width:1px;height:19px;background:#D8D5C8"></div><div class="a" style="left:649px;top:399px;width:1px;height:19px;background:#D8D5C8"></div><div class="a" style="left:699px;top:399px;width:1px;height:19px;background:#D8D5C8"></div><div class="a" style="left:762px;top:399px;width:1px;height:19px;background:#D8D5C8"></div><div class="a" style="left:13px;top:399px;width:1px;height:20px;background:#D6D2C4"></div><div class="a" style="left:29px;top:403px;width:11px;height:10px;border:1px solid #4F70A8;background:linear-gradient(135deg,#DCDCD6,#F3F3F0 70%,#fff)"></div><div class="t" style="left:59px;top:404px;color:#000">Insurance documents and hospital pre-registration information</div><svg class="a" style="left:390px;top:402px" width="13" height="13" viewBox="0 0 13 13"><defs><radialGradient id="pg" cx="35%" cy="30%" r="75%"><stop offset="0" stop-color="#F9B47A"/><stop offset=".45" stop-color="#EC7A2A"/><stop offset="1" stop-color="#D85A0C"/></radialGradient></defs><circle cx="6.5" cy="6.5" r="6.3" fill="url(#pg)"/><circle cx="6.5" cy="6.7" r="2.5" fill="#fff"/></svg><div class="t" style="left:406px;top:404px;color:#000">Normal</div><div class="t" style="left:484px;top:404px;color:#000;letter-spacing:.25px">31/10/2006 16:00</div><svg class="a" style="left:581px;top:402px" width="10" height="13" viewBox="0 0 10 13"><defs><linearGradient id="dg" x1="0" y1="0" x2="1" y2="1"><stop offset="0" stop-color="#FFFFFF"/><stop offset=".4" stop-color="#F4F8FE"/><stop offset="1" stop-color="#B8CCEC"/></linearGradient></defs><path d="M0.5 0.5H7L9.5 3V12.5H0.5Z" fill="url(#dg)" stroke="#7E9CCC" stroke-width=".9"/><path d="M7 0.5V3H9.5" fill="#C8D8F0" stroke="#7E9CCC" stroke-width=".7"/></svg><div class="t" style="left:595px;top:404px;color:#000">Created</div><div class="t" style="left:665px;top:404px;color:#000">0 %</div><div class="t" style="left:719px;top:404px;color:#000">0h 0m</div><div class="t" style="left:780px;top:404px;color:#000">0h 0m</div>
<div class="a" style="left:13px;top:419px;width:809px;height:19px;background:#fff"></div><div class="a" style="left:13px;top:438px;width:809px;height:1px;background:#D6D2C4"></div><div class="a" style="left:57px;top:419px;width:1px;height:19px;background:#D8D5C8"></div><div class="a" style="left:387px;top:419px;width:1px;height:19px;background:#D8D5C8"></div><div class="a" style="left:463px;top:419px;width:1px;height:19px;background:#D8D5C8"></div><div class="a" style="left:576px;top:419px;width:1px;height:19px;background:#D8D5C8"></div><div class="a" style="left:649px;top:419px;width:1px;height:19px;background:#D8D5C8"></div><div class="a" style="left:699px;top:419px;width:1px;height:19px;background:#D8D5C8"></div><div class="a" style="left:762px;top:419px;width:1px;height:19px;background:#D8D5C8"></div><div class="a" style="left:13px;top:419px;width:1px;height:20px;background:#D6D2C4"></div><div class="a" style="left:29px;top:423px;width:11px;height:10px;border:1px solid #4F70A8;background:linear-gradient(135deg,#DCDCD6,#F3F3F0 70%,#fff)"></div><div class="t" style="left:59px;top:424px;color:#000">Snacks and other food, water or juice</div><svg class="a" style="left:390px;top:422px" width="13" height="13" viewBox="0 0 13 13"><defs><radialGradient id="pg" cx="35%" cy="30%" r="75%"><stop offset="0" stop-color="#F9B47A"/><stop offset=".45" stop-color="#EC7A2A"/><stop offset="1" stop-color="#D85A0C"/></radialGradient></defs><circle cx="6.5" cy="6.5" r="6.3" fill="url(#pg)"/><circle cx="6.5" cy="6.7" r="2.5" fill="#fff"/></svg><div class="t" style="left:406px;top:424px;color:#000">Normal</div><div class="t" style="left:484px;top:424px;color:#000;letter-spacing:.25px">31/10/2006 16:00</div><svg class="a" style="left:581px;top:422px" width="10" height="13" viewBox="0 0 10 13"><defs><linearGradient id="dg" x1="0" y1="0" x2="1" y2="1"><stop offset="0" stop-color="#FFFFFF"/><stop offset=".4" stop-color="#F4F8FE"/><stop offset="1" stop-color="#B8CCEC"/></linearGradient></defs><path d="M0.5 0.5H7L9.5 3V12.5H0.5Z" fill="url(#dg)" stroke="#7E9CCC" stroke-width=".9"/><path d="M7 0.5V3H9.5" fill="#C8D8F0" stroke="#7E9CCC" stroke-width=".7"/></svg><div class="t" style="left:595px;top:424px;color:#000">Created</div><div class="t" style="left:665px;top:424px;color:#000">0 %</div><div class="t" style="left:719px;top:424px;color:#000">0h 0m</div><div class="t" style="left:780px;top:424px;color:#000">0h 0m</div>
<div class="a" style="left:13px;top:439px;width:809px;height:19px;background:#fff"></div><div class="a" style="left:13px;top:458px;width:809px;height:1px;background:#D6D2C4"></div><div class="a" style="left:57px;top:439px;width:1px;height:19px;background:#D8D5C8"></div><div class="a" style="left:387px;top:439px;width:1px;height:19px;background:#D8D5C8"></div><div class="a" style="left:463px;top:439px;width:1px;height:19px;background:#D8D5C8"></div><div class="a" style="left:576px;top:439px;width:1px;height:19px;background:#D8D5C8"></div><div class="a" style="left:649px;top:439px;width:1px;height:19px;background:#D8D5C8"></div><div class="a" style="left:699px;top:439px;width:1px;height:19px;background:#D8D5C8"></div><div class="a" style="left:762px;top:439px;width:1px;height:19px;background:#D8D5C8"></div><div class="a" style="left:13px;top:439px;width:1px;height:20px;background:#D6D2C4"></div><div class="a" style="left:29px;top:443px;width:11px;height:10px;border:1px solid #4F70A8;background:linear-gradient(135deg,#DCDCD6,#F3F3F0 70%,#fff)"></div><div class="t" style="left:59px;top:444px;color:#000">Toiletry</div><svg class="a" style="left:390px;top:442px" width="13" height="13" viewBox="0 0 13 13"><defs><radialGradient id="pg" cx="35%" cy="30%" r="75%"><stop offset="0" stop-color="#F9B47A"/><stop offset=".45" stop-color="#EC7A2A"/><stop offset="1" stop-color="#D85A0C"/></radialGradient></defs><circle cx="6.5" cy="6.5" r="6.3" fill="url(#pg)"/><circle cx="6.5" cy="6.7" r="2.5" fill="#fff"/></svg><div class="t" style="left:406px;top:444px;color:#000">Normal</div><div class="t" style="left:484px;top:444px;color:#000;letter-spacing:.25px">31/10/2006 16:00</div><svg class="a" style="left:581px;top:442px" width="10" height="13" viewBox="0 0 10 13"><defs><linearGradient id="dg" x1="0" y1="0" x2="1" y2="1"><stop offset="0" stop-color="#FFFFFF"/><stop offset=".4" stop-color="#F4F8FE"/><stop offset="1" stop-color="#B8CCEC"/></linearGradient></defs><path d="M0.5 0.5H7L9.5 3V12.5H0.5Z" fill="url(#dg)" stroke="#7E9CCC" stroke-width=".9"/><path d="M7 0.5V3H9.5" fill="#C8D8F0" stroke="#7E9CCC" stroke-width=".7"/></svg><div class="t" style="left:595px;top:444px;color:#000">Created</div><div class="t" style="left:665px;top:444px;color:#000">0 %</div><div class="t" style="left:719px;top:444px;color:#000">0h 0m</div><div class="t" style="left:780px;top:444px;color:#000">0h 0m</div>
<div class="a" style="left:2px;top:459px;width:820px;height:14px;background:#EEEBDD"></div><div class="a" style="left:2px;top:472px;width:820px;height:1px;background:#C9C2B2"></div><div class="a" style="left:4px;top:462px;width:8px;height:8px;border:1px solid #7A98C0;background:#F8F8F4"></div><div class="a" style="left:6px;top:465px;width:4px;height:1px;background:#333"></div><div class="t" style="left:15px;top:460px">Category: For You</div>
<div class="a" style="left:13px;top:473px;width:809px;height:19px;background:#fff"></div><div class="a" style="left:13px;top:492px;width:809px;height:1px;background:#D6D2C4"></div><div class="a" style="left:57px;top:473px;width:1px;height:19px;background:#D8D5C8"></div><div class="a" style="left:387px;top:473px;width:1px;height:19px;background:#D8D5C8"></div><div class="a" style="left:463px;top:473px;width:1px;height:19px;background:#D8D5C8"></div><div class="a" style="left:576px;top:473px;width:1px;height:19px;background:#D8D5C8"></div><div class="a" style="left:649px;top:473px;width:1px;height:19px;background:#D8D5C8"></div><div class="a" style="left:699px;top:473px;width:1px;height:19px;background:#D8D5C8"></div><div class="a" style="left:762px;top:473px;width:1px;height:19px;background:#D8D5C8"></div><div class="a" style="left:13px;top:473px;width:1px;height:20px;background:#D6D2C4"></div><div class="a" style="left:29px;top:477px;width:11px;height:10px;border:1px solid #4F70A8;background:linear-gradient(135deg,#DCDCD6,#F3F3F0 70%,#fff)"></div><div class="t" style="left:59px;top:478px;color:#000">Blanc journal and pen to write down your impressions</div><svg class="a" style="left:390px;top:476px" width="13" height="13" viewBox="0 0 13 13"><defs><radialGradient id="pg" cx="35%" cy="30%" r="75%"><stop offset="0" stop-color="#F9B47A"/><stop offset=".45" stop-color="#EC7A2A"/><stop offset="1" stop-color="#D85A0C"/></radialGradient></defs><circle cx="6.5" cy="6.5" r="6.3" fill="url(#pg)"/><circle cx="6.5" cy="6.7" r="2.5" fill="#fff"/></svg><div class="t" style="left:406px;top:478px;color:#000">Normal</div><div class="t" style="left:484px;top:478px;color:#000;letter-spacing:.25px">31/10/2006 16:00</div><svg class="a" style="left:581px;top:476px" width="10" height="13" viewBox="0 0 10 13"><defs><linearGradient id="dg" x1="0" y1="0" x2="1" y2="1"><stop offset="0" stop-color="#FFFFFF"/><stop offset=".4" stop-color="#F4F8FE"/><stop offset="1" stop-color="#B8CCEC"/></linearGradient></defs><path d="M0.5 0.5H7L9.5 3V12.5H0.5Z" fill="url(#dg)" stroke="#7E9CCC" stroke-width=".9"/><path d="M7 0.5V3H9.5" fill="#C8D8F0" stroke="#7E9CCC" stroke-width=".7"/></svg><div class="t" style="left:595px;top:478px;color:#000">Created</div><div class="t" style="left:665px;top:478px;color:#000">0 %</div><div class="t" style="left:719px;top:478px;color:#000">0h 0m</div><div class="t" style="left:780px;top:478px;color:#000">0h 0m</div>
<div class="a" style="left:13px;top:493px;width:809px;height:19px;background:#fff"></div><div class="a" style="left:13px;top:512px;width:809px;height:1px;background:#D6D2C4"></div><div class="a" style="left:57px;top:493px;width:1px;height:19px;background:#D8D5C8"></div><div class="a" style="left:387px;top:493px;width:1px;height:19px;background:#D8D5C8"></div><div class="a" style="left:463px;top:493px;width:1px;height:19px;background:#D8D5C8"></div><div class="a" style="left:576px;top:493px;width:1px;height:19px;background:#D8D5C8"></div><div class="a" style="left:649px;top:493px;width:1px;height:19px;background:#D8D5C8"></div><div class="a" style="left:699px;top:493px;width:1px;height:19px;background:#D8D5C8"></div><div class="a" style="left:762px;top:493px;width:1px;height:19px;background:#D8D5C8"></div><div class="a" style="left:13px;top:493px;width:1px;height:20px;background:#D6D2C4"></div><div class="a" style="left:29px;top:497px;width:11px;height:10px;border:1px solid #4F70A8;background:linear-gradient(135deg,#DCDCD6,#F3F3F0 70%,#fff)"></div><div class="t" style="left:59px;top:498px;color:#000">Clothes for going home</div><svg class="a" style="left:390px;top:496px" width="13" height="13" viewBox="0 0 13 13"><defs><radialGradient id="pg" cx="35%" cy="30%" r="75%"><stop offset="0" stop-color="#F9B47A"/><stop offset=".45" stop-color="#EC7A2A"/><stop offset="1" stop-color="#D85A0C"/></radialGradient></defs><circle cx="6.5" cy="6.5" r="6.3" fill="url(#pg)"/><circle cx="6.5" cy="6.7" r="2.5" fill="#fff"/></svg><div class="t" style="left:406px;top:498px;color:#000">Normal</div><div class="t" style="left:484px;top:498px;color:#000;letter-spacing:.25px">31/10/2006 16:00</div><svg class="a" style="left:581px;top:496px" width="10" height="13" viewBox="0 0 10 13"><defs><linearGradient id="dg" x1="0" y1="0" x2="1" y2="1"><stop offset="0" stop-color="#FFFFFF"/><stop offset=".4" stop-color="#F4F8FE"/><stop offset="1" stop-color="#B8CCEC"/></linearGradient></defs><path d="M0.5 0.5H7L9.5 3V12.5H0.5Z" fill="url(#dg)" stroke="#7E9CCC" stroke-width=".9"/><path d="M7 0.5V3H9.5" fill="#C8D8F0" stroke="#7E9CCC" stroke-width=".7"/></svg><div class="t" style="left:595px;top:498px;color:#000">Created</div><div class="t" style="left:665px;top:498px;color:#000">0 %</div><div class="t" style="left:719px;top:498px;color:#000">0h 0m</div><div class="t" style="left:780px;top:498px;color:#000">0h 0m</div>
<div class="a" style="left:13px;top:513px;width:809px;height:19px;background:#fff"></div><div class="a" style="left:13px;top:532px;width:809px;height:1px;background:#D6D2C4"></div><div class="a" style="left:57px;top:513px;width:1px;height:19px;background:#D8D5C8"></div><div class="a" style="left:387px;top:513px;width:1px;height:19px;background:#D8D5C8"></div><div class="a" style="left:463px;top:513px;width:1px;height:19px;background:#D8D5C8"></div><div class="a" style="left:576px;top:513px;width:1px;height:19px;background:#D8D5C8"></div><div class="a" style="left:649px;top:513px;width:1px;height:19px;background:#D8D5C8"></div><div class="a" style="left:699px;top:513px;width:1px;height:19px;background:#D8D5C8"></div><div class="a" style="left:762px;top:513px;width:1px;height:19px;background:#D8D5C8"></div><div class="a" style="left:13px;top:513px;width:1px;height:20px;background:#D6D2C4"></div><div class="a" style="left:29px;top:517px;width:11px;height:10px;border:1px solid #4F70A8;background:linear-gradient(135deg,#DCDCD6,#F3F3F0 70%,#fff)"></div><div class="t" style="left:59px;top:518px;color:#000">Cotton undies</div><svg class="a" style="left:390px;top:516px" width="13" height="13" viewBox="0 0 13 13"><defs><radialGradient id="pg" cx="35%" cy="30%" r="75%"><stop offset="0" stop-color="#F9B47A"/><stop offset=".45" stop-color="#EC7A2A"/><stop offset="1" stop-color="#D85A0C"/></radialGradient></defs><circle cx="6.5" cy="6.5" r="6.3" fill="url(#pg)"/><circle cx="6.5" cy="6.7" r="2.5" fill="#fff"/></svg><div class="t" style="left:406px;top:518px;color:#000">Normal</div><div class="t" style="left:484px;top:518px;color:#000;letter-spacing:.25px">31/10/2006 16:00</div><svg class="a" style="left:581px;top:516px" width="10" height="13" viewBox="0 0 10 13"><defs><linearGradient id="dg" x1="0" y1="0" x2="1" y2="1"><stop offset="0" stop-color="#FFFFFF"/><stop offset=".4" stop-color="#F4F8FE"/><stop offset="1" stop-color="#B8CCEC"/></linearGradient></defs><path d="M0.5 0.5H7L9.5 3V12.5H0.5Z" fill="url(#dg)" stroke="#7E9CCC" stroke-width=".9"/><path d="M7 0.5V3H9.5" fill="#C8D8F0" stroke="#7E9CCC" stroke-width=".7"/></svg><div class="t" style="left:595px;top:518px;color:#000">Created</div><div class="t" style="left:665px;top:518px;color:#000">0 %</div><div class="t" style="left:719px;top:518px;color:#000">0h 0m</div><div class="t" style="left:780px;top:518px;color:#000">0h 0m</div>
<div class="a" style="left:13px;top:533px;width:809px;height:19px;background:#fff"></div><div class="a" style="left:13px;top:552px;width:809px;height:1px;background:#D6D2C4"></div><div class="a" style="left:57px;top:533px;width:1px;height:19px;background:#D8D5C8"></div><div class="a" style="left:387px;top:533px;width:1px;height:19px;background:#D8D5C8"></div><div class="a" style="left:463px;top:533px;width:1px;height:19px;background:#D8D5C8"></div><div class="a" style="left:576px;top:533px;width:1px;height:19px;background:#D8D5C8"></div><div class="a" style="left:649px;top:533px;width:1px;height:19px;background:#D8D5C8"></div><div class="a" style="left:699px;top:533px;width:1px;height:19px;background:#D8D5C8"></div><div class="a" style="left:762px;top:533px;width:1px;height:19px;background:#D8D5C8"></div><div class="a" style="left:13px;top:533px;width:1px;height:20px;background:#D6D2C4"></div><div class="a" style="left:29px;top:537px;width:11px;height:10px;border:1px solid #4F70A8;background:linear-gradient(135deg,#DCDCD6,#F3F3F0 70%,#fff)"></div><div class="t" style="left:59px;top:538px;color:#000">Documents</div><svg class="a" style="left:390px;top:536px" width="13" height="13" viewBox="0 0 13 13"><defs><radialGradient id="pg" cx="35%" cy="30%" r="75%"><stop offset="0" stop-color="#F9B47A"/><stop offset=".45" stop-color="#EC7A2A"/><stop offset="1" stop-color="#D85A0C"/></radialGradient></defs><circle cx="6.5" cy="6.5" r="6.3" fill="url(#pg)"/><circle cx="6.5" cy="6.7" r="2.5" fill="#fff"/></svg><div class="t" style="left:406px;top:538px;color:#000">Normal</div><div class="t" style="left:484px;top:538px;color:#000;letter-spacing:.25px">31/10/2006 16:00</div><svg class="a" style="left:581px;top:536px" width="10" height="13" viewBox="0 0 10 13"><defs><linearGradient id="dg" x1="0" y1="0" x2="1" y2="1"><stop offset="0" stop-color="#FFFFFF"/><stop offset=".4" stop-color="#F4F8FE"/><stop offset="1" stop-color="#B8CCEC"/></linearGradient></defs><path d="M0.5 0.5H7L9.5 3V12.5H0.5Z" fill="url(#dg)" stroke="#7E9CCC" stroke-width=".9"/><path d="M7 0.5V3H9.5" fill="#C8D8F0" stroke="#7E9CCC" stroke-width=".7"/></svg><div class="t" style="left:595px;top:538px;color:#000">Created</div><div class="t" style="left:665px;top:538px;color:#000">0 %</div><div class="t" style="left:719px;top:538px;color:#000">0h 0m</div><div class="t" style="left:780px;top:538px;color:#000">0h 0m</div>
<div class="a" style="left:13px;top:553px;width:809px;height:24px;background:#fff"></div><div class="a" style="left:13px;top:577px;width:809px;height:1px;background:#D6D2C4"></div><div class="a" style="left:13px;top:553px;width:1px;height:25px;background:#D6D2C4"></div><div class="t" style="left:29px;top:555px;color:#0B2FD6;line-height:10px">Insurance card, registration card, telephone book, birth<br>plan</div>
<div class="a" style="left:13px;top:578px;width:809px;height:19px;background:#fff"></div><div class="a" style="left:13px;top:597px;width:809px;height:1px;background:#D6D2C4"></div><div class="a" style="left:57px;top:578px;width:1px;height:19px;background:#D8D5C8"></div><div class="a" style="left:387px;top:578px;width:1px;height:19px;background:#D8D5C8"></div><div class="a" style="left:463px;top:578px;width:1px;height:19px;background:#D8D5C8"></div><div class="a" style="left:576px;top:578px;width:1px;height:19px;background:#D8D5C8"></div><div class="a" style="left:649px;top:578px;width:1px;height:19px;background:#D8D5C8"></div><div class="a" style="left:699px;top:578px;width:1px;height:19px;background:#D8D5C8"></div><div class="a" style="left:762px;top:578px;width:1px;height:19px;background:#D8D5C8"></div><div class="a" style="left:13px;top:578px;width:1px;height:20px;background:#D6D2C4"></div><div class="a" style="left:29px;top:582px;width:11px;height:10px;border:1px solid #4F70A8;background:linear-gradient(135deg,#DCDCD6,#F3F3F0 70%,#fff)"></div><div class="t" style="left:59px;top:583px;color:#000">Glasses if you wear them</div><svg class="a" style="left:390px;top:581px" width="13" height="13" viewBox="0 0 13 13"><defs><radialGradient id="pg" cx="35%" cy="30%" r="75%"><stop offset="0" stop-color="#F9B47A"/><stop offset=".45" stop-color="#EC7A2A"/><stop offset="1" stop-color="#D85A0C"/></radialGradient></defs><circle cx="6.5" cy="6.5" r="6.3" fill="url(#pg)"/><circle cx="6.5" cy="6.7" r="2.5" fill="#fff"/></svg><div class="t" style="left:406px;top:583px;color:#000">Normal</div><div class="t" style="left:484px;top:583px;color:#000;letter-spacing:.25px">31/10/2006 16:00</div><svg class="a" style="left:581px;top:581px" width="10" height="13" viewBox="0 0 10 13"><defs><linearGradient id="dg" x1="0" y1="0" x2="1" y2="1"><stop offset="0" stop-color="#FFFFFF"/><stop offset=".4" stop-color="#F4F8FE"/><stop offset="1" stop-color="#B8CCEC"/></linearGradient></defs><path d="M0.5 0.5H7L9.5 3V12.5H0.5Z" fill="url(#dg)" stroke="#7E9CCC" stroke-width=".9"/><path d="M7 0.5V3H9.5" fill="#C8D8F0" stroke="#7E9CCC" stroke-width=".7"/></svg><div class="t" style="left:595px;top:583px;color:#000">Created</div><div class="t" style="left:665px;top:583px;color:#000">0 %</div><div class="t" style="left:719px;top:583px;color:#000">0h 0m</div><div class="t" style="left:780px;top:583px;color:#000">0h 0m</div>
<div class="a" style="left:13px;top:598px;width:809px;height:19px;background:#fff"></div><div class="a" style="left:13px;top:617px;width:809px;height:1px;background:#D6D2C4"></div><div class="a" style="left:57px;top:598px;width:1px;height:19px;background:#D8D5C8"></div><div class="a" style="left:387px;top:598px;width:1px;height:19px;background:#D8D5C8"></div><div class="a" style="left:463px;top:598px;width:1px;height:19px;background:#D8D5C8"></div><div class="a" style="left:576px;top:598px;width:1px;height:19px;background:#D8D5C8"></div><div class="a" style="left:649px;top:598px;width:1px;height:19px;background:#D8D5C8"></div><div class="a" style="left:699px;top:598px;width:1px;height:19px;background:#D8D5C8"></div><div class="a" style="left:762px;top:598px;width:1px;height:19px;background:#D8D5C8"></div><div class="a" style="left:13px;top:598px;width:1px;height:20px;background:#D6D2C4"></div><div class="a" style="left:29px;top:602px;width:11px;height:10px;border:1px solid #4F70A8;background:linear-gradient(135deg,#DCDCD6,#F3F3F0 70%,#fff)"></div><div class="t" style="left:59px;top:603px;color:#000">Hair band</div><svg class="a" style="left:390px;top:601px" width="13" height="13" viewBox="0 0 13 13"><defs><radialGradient id="pg" cx="35%" cy="30%" r="75%"><stop offset="0" stop-color="#F9B47A"/><stop offset=".45" stop-color="#EC7A2A"/><stop offset="1" stop-color="#D85A0C"/></radialGradient></defs><circle cx="6.5" cy="6.5" r="6.3" fill="url(#pg)"/><circle cx="6.5" cy="6.7" r="2.5" fill="#fff"/></svg><div class="t" style="left:406px;top:603px;color:#000">Normal</div><div class="t" style="left:484px;top:603px;color:#000;letter-spacing:.25px">31/10/2006 16:00</div><svg class="a" style="left:581px;top:601px" width="10" height="13" viewBox="0 0 10 13"><defs><linearGradient id="dg" x1="0" y1="0" x2="1" y2="1"><stop offset="0" stop-color="#FFFFFF"/><stop offset=".4" stop-color="#F4F8FE"/><stop offset="1" stop-color="#B8CCEC"/></linearGradient></defs><path d="M0.5 0.5H7L9.5 3V12.5H0.5Z" fill="url(#dg)" stroke="#7E9CCC" stroke-width=".9"/><path d="M7 0.5V3H9.5" fill="#C8D8F0" stroke="#7E9CCC" stroke-width=".7"/></svg><div class="t" style="left:595px;top:603px;color:#000">Created</div><div class="t" style="left:665px;top:603px;color:#000">0 %</div><div class="t" style="left:719px;top:603px;color:#000">0h 0m</div><div class="t" style="left:780px;top:603px;color:#000">0h 0m</div>
<div class="a" style="left:13px;top:618px;width:809px;height:19px;background:#fff"></div><div class="a" style="left:13px;top:637px;width:809px;height:1px;background:#D6D2C4"></div><div class="a" style="left:57px;top:618px;width:1px;height:19px;background:#D8D5C8"></div><div class="a" style="left:387px;top:618px;width:1px;height:19px;background:#D8D5C8"></div><div class="a" style="left:463px;top:618px;width:1px;height:19px;background:#D8D5C8"></div><div class="a" style="left:576px;top:618px;width:1px;height:19px;background:#D8D5C8"></div><div class="a" style="left:649px;top:618px;width:1px;height:19px;background:#D8D5C8"></div><div class="a" style="left:699px;top:618px;width:1px;height:19px;background:#D8D5C8"></div><div class="a" style="left:762px;top:618px;width:1px;height:19px;background:#D8D5C8"></div><div class="a" style="left:13px;top:618px;width:1px;height:20px;background:#D6D2C4"></div><div class="a" style="left:29px;top:622px;width:11px;height:10px;border:1px solid #4F70A8;background:linear-gradient(135deg,#DCDCD6,#F3F3F0 70%,#fff)"></div><div class="t" style="left:59px;top:623px;color:#000">Make-up</div><svg class="a" style="left:390px;top:621px" width="13" height="13" viewBox="0 0 13 13"><defs><radialGradient id="pg" cx="35%" cy="30%" r="75%"><stop offset="0" stop-color="#F9B47A"/><stop offset=".45" stop-color="#EC7A2A"/><stop offset="1" stop-color="#D85A0C"/></radialGradient></defs><circle cx="6.5" cy="6.5" r="6.3" fill="url(#pg)"/><circle cx="6.5" cy="6.7" r="2.5" fill="#fff"/></svg><div class="t" style="left:406px;top:623px;color:#000">Normal</div><div class="t" style="left:484px;top:623px;color:#000;letter-spacing:.25px">31/10/2006 16:00</div><svg class="a" style="left:581px;top:621px" width="10" height="13" viewBox="0 0 10 13"><defs><linearGradient id="dg" x1="0" y1="0" x2="1" y2="1"><stop offset="0" stop-color="#FFFFFF"/><stop offset=".4" stop-color="#F4F8FE"/><stop offset="1" stop-color="#B8CCEC"/></linearGradient></defs><path d="M0.5 0.5H7L9.5 3V12.5H0.5Z" fill="url(#dg)" stroke="#7E9CCC" stroke-width=".9"/><path d="M7 0.5V3H9.5" fill="#C8D8F0" stroke="#7E9CCC" stroke-width=".7"/></svg><div class="t" style="left:595px;top:623px;color:#000">Created</div><div class="t" style="left:665px;top:623px;color:#000">0 %</div><div class="t" style="left:719px;top:623px;color:#000">0h 0m</div><div class="t" style="left:780px;top:623px;color:#000">0h 0m</div>
</div></div>
<div class="a" style="left:2px;top:627px;width:820px;height:20px;background:#ECE9D8;border-top:1px solid #D8D4C6"></div>
<div class="a" style="left:58px;top:629px;width:329px;height:16px;background:#F0EFE8;border-top:1px solid #D6D2C2;border-left:1px solid #DCD8C8"></div>
<div class="t" style="left:61px;top:632px">Count: 32</div>
<div class="a" style="left:701px;top:629px;width:59px;height:16px;background:#F0EFE8;border-top:1px solid #D6D2C2;border-left:1px solid #DCD8C8"></div>
<div class="t" style="left:704px;top:632px">0h 0m</div>
<div class="a" style="left:763px;top:629px;width:58px;height:16px;background:#F0EFE8;border-top:1px solid #D6D2C2;border-left:1px solid #DCD8C8"></div>
<div class="t" style="left:766px;top:632px">0h 0m</div>
<div class="a" style="left:823px;top:63px;width:13px;height:584px;background:#F4F3EE"></div>
<div class="a" style="left:824px;top:63px;width:11px;height:12px;background:linear-gradient(#D4E2FC,#C2D4F8);border-radius:2px"></div>
<svg class="a" style="left:826px;top:66px" width="7" height="5" viewBox="0 0 7 5"><path d="M0.5 4L3.5 1L6.5 4" stroke="#4D6185" stroke-width="1.4" fill="none"/></svg>
<div class="a" style="left:824px;top:76px;width:11px;height:382px;background:linear-gradient(90deg,#E6EEFC,#D8E5FC 50%,#CCDCF9);border:1px solid #C2D4F4;border-radius:2px"></div>
<div class="a" style="left:827px;top:265px;width:6px;height:1px;background:#AFC2EA"></div>
<div class="a" style="left:827px;top:267px;width:6px;height:1px;background:#AFC2EA"></div>
<div class="a" style="left:827px;top:269px;width:6px;height:1px;background:#AFC2EA"></div>
<div class="a" style="left:827px;top:271px;width:6px;height:1px;background:#AFC2EA"></div>
<div class="a" style="left:824px;top:634px;width:11px;height:12px;background:linear-gradient(#D4E2FC,#C2D4F8);border-radius:2px"></div>
<svg class="a" style="left:826px;top:637px" width="7" height="5" viewBox="0 0 7 5"><path d="M0.5 1L3.5 4L6.5 1" stroke="#4D6185" stroke-width="1.4" fill="none"/></svg>
<div class="a" style="left:1px;top:648px;width:835px;height:130px;background:#ECE9D8"></div>
<div class="a" style="left:3px;top:649px;width:832px;height:18px;background:linear-gradient(#FCFBF8,#F3F2EB);border:1px solid #DCD8C8;border-radius:4px"></div><div class="t" style="left:5px;top:653px;color:#111">Note</div>
<svg class="a" style="left:809px;top:653px" width="9" height="10" viewBox="0 0 9 10"><path d="M1.5 1H7.5M3 1V5M6 1V5M0.5 5.5H8.5M4.5 5.5V10" stroke="#1E56C8" stroke-width="1.3" fill="none"/></svg>
<svg class="a" style="left:822px;top:653px" width="10" height="10" viewBox="0 0 10 10"><rect width="10" height="10" fill="#E06A20"/><rect x=".5" y=".5" width="9" height="9" fill="none" stroke="#F09050" stroke-width=".6"/><path d="M2.5 2.5L7.5 7.5M7.5 2.5L2.5 7.5" stroke="#fff" stroke-width="1.8"/></svg>
<div class="a" style="left:2px;top:667px;width:833px;height:24px;background:linear-gradient(#F4F3EC,#EDEBE1 60%,#E5E2D4)"></div>
<div class="a" style="left:7px;top:672px;width:1px;height:1px;background:#8E8C80;box-shadow:1px 1px 0 #FFFFFF"></div><div class="a" style="left:7px;top:675px;width:1px;height:1px;background:#8E8C80;box-shadow:1px 1px 0 #FFFFFF"></div><div class="a" style="left:7px;top:678px;width:1px;height:1px;background:#8E8C80;box-shadow:1px 1px 0 #FFFFFF"></div><div class="a" style="left:7px;top:681px;width:1px;height:1px;background:#8E8C80;box-shadow:1px 1px 0 #FFFFFF"></div><div class="a" style="left:7px;top:684px;width:1px;height:1px;background:#8E8C80;box-shadow:1px 1px 0 #FFFFFF"></div>
<svg class="a" style="left:13px;top:672px" width="13" height="13" viewBox="0 0 13 13"><path d="M2 11 Q1 7 4 6 L9 1 L12 4 L7 9 Q6 12 2 11Z" fill="#D8D8D4" stroke="#A4A49C" stroke-width=".8"/><path d="M4 9 L8 5" stroke="#B8B8B0" stroke-width="1"/></svg>
<div class="a" style="left:32px;top:670px;width:1px;height:18px;background:#C5C2B2"></div>
<svg class="a" style="left:40px;top:673px" width="12" height="13" viewBox="0 0 12 13"><rect x="0.5" y="0.5" width="10" height="12" fill="#EEF2FA" stroke="#A0A8C0" stroke-width=".7"/><circle cx="5" cy="6" r="3" fill="#D8E6F8" stroke="#8AA0C8" stroke-width=".8"/><path d="M7 8.5 L10.5 12" stroke="#E07A20" stroke-width="1.5"/></svg>
<svg class="a" style="left:58px;top:673px" width="13" height="12" viewBox="0 0 13 12"><rect x="3" y=".5" width="7" height="4" fill="#fff" stroke="#9AA" stroke-width=".7"/><rect x="0.5" y="4.5" width="12" height="5" rx="1" fill="#D8DCE0" stroke="#8A9098" stroke-width=".7"/><rect x="3" y="8.5" width="7" height="3" fill="#fff" stroke="#9AA" stroke-width=".7"/><rect x="10.5" y="5.5" width="1.5" height="1" fill="#3C3"/></svg>
<div class="a" style="left:76px;top:670px;width:1px;height:18px;background:#C5C2B2"></div>
<svg class="a" style="left:83px;top:674px" width="12" height="12" viewBox="0 0 12 12"><rect x=".5" y=".5" width="11" height="11" rx="1.5" fill="#E4ECFA" stroke="#6C94DC" stroke-width=".9"/><text x="6" y="9.5" text-anchor="middle" font-family="Liberation Serif" font-size="9.5" fill="#4A7AD8" font-weight="bold">B</text></svg>
<div class="a" style="left:98px;top:670px;width:19px;height:19px;border:1px solid #8AA8D8;border-radius:3px;background:linear-gradient(#FFFFFF,#EEF2F8)"></div>
<svg class="a" style="left:102px;top:674px" width="12" height="12" viewBox="0 0 12 12"><rect x=".5" y=".5" width="11" height="11" rx="1.5" fill="#E4ECFA" stroke="#6C94DC" stroke-width=".9"/><text x="6" y="9.5" text-anchor="middle" font-family="Liberation Serif" font-size="9.5" fill="#4A7AD8" font-style="italic" font-weight="bold">I</text></svg>
<svg class="a" style="left:121px;top:674px" width="12" height="12" viewBox="0 0 12 12"><rect x=".5" y=".5" width="11" height="11" rx="1.5" fill="#E8EEFA" stroke="#9AB4E4" stroke-width=".9"/><text x="6" y="9" text-anchor="middle" font-family="Liberation Serif" font-size="9" fill="#7A9AD8" text-decoration="underline">U</text></svg>
<div class="a" style="left:139px;top:670px;width:1px;height:18px;background:#C5C2B2"></div>
<div class="a" style="left:143px;top:673px;width:73px;height:14px;background:#fff"></div><div class="a" style="left:205px;top:673px;width:11px;height:14px;background:linear-gradient(#D2E0FA,#B8CCF2);border-radius:1px"></div><svg class="a" style="left:207px;top:678px" width="7" height="5" viewBox="0 0 7 5"><path d="M0.5 0.5L3.5 3.5L6.5 0.5" stroke="#4D6185" stroke-width="1.3" fill="none"/></svg>
<svg class="a" style="left:144px;top:674px" width="10" height="11" viewBox="0 0 10 11"><text x="0" y="9" font-family="Liberation Serif" font-size="10" font-weight="bold" fill="#222">T</text><text x="3" y="10" font-family="Liberation Serif" font-size="8" font-weight="bold" fill="#222">T</text></svg>
<div class="t" style="left:155px;top:675px">Tahoma</div>
<div class="a" style="left:217px;top:673px;width:75px;height:14px;background:#fff"></div><div class="a" style="left:281px;top:673px;width:11px;height:14px;background:linear-gradient(#D2E0FA,#B8CCF2);border-radius:1px"></div><svg class="a" style="left:283px;top:678px" width="7" height="5" viewBox="0 0 7 5"><path d="M0.5 0.5L3.5 3.5L6.5 0.5" stroke="#4D6185" stroke-width="1.3" fill="none"/></svg>
<div class="t" style="left:220px;top:675px;width:61px;overflow:hidden;letter-spacing:-.35px">DEFAULT_CHAR</div>
<div class="a" style="left:294px;top:673px;width:78px;height:14px;background:#fff"></div><div class="a" style="left:361px;top:673px;width:11px;height:14px;background:linear-gradient(#D2E0FA,#B8CCF2);border-radius:1px"></div><svg class="a" style="left:363px;top:678px" width="7" height="5" viewBox="0 0 7 5"><path d="M0.5 0.5L3.5 3.5L6.5 0.5" stroke="#4D6185" stroke-width="1.3" fill="none"/></svg>
<div class="a" style="left:296px;top:674px;width:22px;height:12px;background:#0B1664;border:1px solid #5A5A6A"></div>
<div class="t" style="left:319px;top:675px">Black</div>
<svg class="a" style="left:377px;top:674px" width="12" height="12" viewBox="0 0 12 12"><rect x=".5" y=".5" width="11" height="11" rx="1.5" fill="#E4ECFA" stroke="#7A9EDC" stroke-width=".8"/><text x="2" y="9.5" font-family="Liberation Sans" font-size="8" fill="#3A9A40">A</text><rect x="8" y="3" width="2" height="2" fill="#D04040"/><rect x="8" y="6" width="2" height="3" fill="#40A040"/></svg>
<svg class="a" style="left:396px;top:674px" width="12" height="12" viewBox="0 0 12 12"><rect x=".5" y=".5" width="11" height="11" rx="1.5" fill="#E4ECFA" stroke="#7A9EDC" stroke-width=".8"/><text x="2" y="9.5" font-family="Liberation Sans" font-size="8" fill="#3A9A40">A</text><rect x="8" y="3" width="2" height="3" fill="#40A040"/><rect x="8" y="7" width="2" height="2" fill="#D04040"/></svg>
<div class="a" style="left:413px;top:673px;width:27px;height:14px;background:#fff"></div><div class="a" style="left:429px;top:673px;width:11px;height:14px;background:linear-gradient(#D2E0FA,#B8CCF2);border-radius:1px"></div><svg class="a" style="left:431px;top:678px" width="7" height="5" viewBox="0 0 7 5"><path d="M0.5 0.5L3.5 3.5L6.5 0.5" stroke="#4D6185" stroke-width="1.3" fill="none"/></svg>
<div class="a" style="left:443px;top:670px;width:1px;height:18px;background:#C5C2B2"></div>
<div class="a" style="left:447px;top:670px;width:19px;height:20px;border:1px solid #8AA8D8;border-radius:3px;background:linear-gradient(#FFFFFF,#EEF2F8)"></div>
<svg class="a" style="left:450px;top:674px" width="12" height="12" viewBox="0 0 12 12"><rect x=".5" y=".5" width="11" height="11" rx="1" fill="#EAF2FC" stroke="#3A78E0" stroke-width="1"/><rect x="2" y="2" width="8" height="8" fill="#9CD49A"/><path d="M6 5H10M7 7H10" stroke="#FFFFFF" stroke-width="1.1"/><path d="M2.5 3.5H9.5M2.5 8.5H9.5" stroke="#3AA048" stroke-width="1.1"/></svg>
<svg class="a" style="left:469px;top:674px" width="12" height="12" viewBox="0 0 12 12"><rect x=".5" y=".5" width="11" height="11" rx="1" fill="#EAF2FC" stroke="#7A9EDC" stroke-width="1"/><rect x="2" y="2" width="8" height="8" fill="#9CD49A"/><path d="M2 6H4M8 6H10" stroke="#FFFFFF" stroke-width="1.1"/><path d="M2.5 3.5H9.5M2.5 8.5H9.5" stroke="#3AA048" stroke-width="1.1"/></svg>
<svg class="a" style="left:488px;top:674px" width="12" height="12" viewBox="0 0 12 12"><rect x=".5" y=".5" width="11" height="11" rx="1" fill="#EAF2FC" stroke="#7A9EDC" stroke-width="1"/><rect x="2" y="2" width="8" height="8" fill="#9CD49A"/><path d="M2 6H6" stroke="#FFFFFF" stroke-width="1.1"/><path d="M2.5 3.5H9.5M2.5 8.5H9.5" stroke="#3AA048" stroke-width="1.1"/></svg>
<svg class="a" style="left:507px;top:673px" width="12" height="13" viewBox="0 0 12 13"><path d="M0 1L1.5 3L3 1ZM0 5.5L1.5 7.5L3 5.5ZM0 10L1.5 12L3 10Z" fill="#2A5AC8"/><path d="M1.5 1V12" stroke="#2A5AC8" stroke-width=".8"/><path d="M4 2H12M4 6.5H12M4 11H12" stroke="#3AA048" stroke-width="1.6"/></svg>
<svg class="a" style="left:525px;top:684px" width="5" height="3" viewBox="0 0 5 3"><path d="M0 0H5L2.5 3Z" fill="#000"/></svg>
<div class="a" style="left:2px;top:691px;width:833px;height:63px;background:#fff;border:1px solid #A8BCE0"></div>
<div class="t" style="left:24px;top:694px;font-family:'Liberation Serif';font-style:italic;font-size:12.8px;line-height:14px;color:#15152A">Jumpsuits, snowsuit or sweater, depending on the season</div>
<div class="a" style="left:1px;top:754px;width:835px;height:24px;background:linear-gradient(#F6F5F0,#F0EEE6)"></div>
<div class="a" style="left:5px;top:756px;width:26px;height:20px;background:#FCFCFA;border:1px solid #C8C4B4;border-top:none;border-bottom:none"></div>
<div class="a" style="left:6px;top:774px;width:24px;height:2px;background:#F3A03C"></div>
<div class="a" style="left:30px;top:757px;width:805px;height:1px;background:#CFCBBC"></div>
<div class="t" style="left:8px;top:761px">Note</div>
<div class="a" style="left:31px;top:757px;width:57px;height:19px;background:linear-gradient(#F4F3EE,#E8E6DC);border:1px solid #B6C6E6;border-top:none;border-radius:0 0 3px 3px"></div>
<div class="t" style="left:33px;top:761px">Search result</div>
<div class="a" style="left:0;top:778px;width:838px;height:1px;background:#C8C4B4"></div>
<div class="a" style="left:838px;top:62px;width:185px;height:716px;background:#ECE9D8;border:1px solid #A4B8DC"></div>
<div class="a" style="left:839px;top:63px;width:183px;height:18px;background:linear-gradient(#FCFBF8,#F3F2EB);border:1px solid #DCD8C8;border-radius:4px"></div><div class="t" style="left:841px;top:67px;color:#111">Categories Bar</div>
<svg class="a" style="left:983px;top:67px" width="10" height="10" viewBox="0 0 10 10"><rect x=".5" y=".5" width="9" height="9" rx="1.5" fill="#2A6AE0" stroke="#1A4AB0" stroke-width=".7"/><rect x="3" y="3" width="4" height="4" fill="#fff" opacity=".85"/><rect x="4" y="4" width="2" height="2" fill="#2A6AE0"/></svg>
<svg class="a" style="left:997px;top:67px" width="9" height="10" viewBox="0 0 9 10"><path d="M1.5 1H7.5M3 1V5M6 1V5M0.5 5.5H8.5M4.5 5.5V10" stroke="#1E56C8" stroke-width="1.3" fill="none"/></svg>
<svg class="a" style="left:1009px;top:67px" width="10" height="10" viewBox="0 0 10 10"><rect width="10" height="10" fill="#E06A20"/><rect x=".5" y=".5" width="9" height="9" fill="none" stroke="#F09050" stroke-width=".6"/><path d="M2.5 2.5L7.5 7.5M7.5 2.5L2.5 7.5" stroke="#fff" stroke-width="1.8"/></svg>
<div class="a" style="left:838px;top:81px;width:184px;height:24px;background:linear-gradient(#F4F3EC,#EDEBE1 60%,#E5E2D4)"></div>
<div class="a" style="left:843px;top:86px;width:1px;height:1px;background:#8E8C80;box-shadow:1px 1px 0 #FFFFFF"></div><div class="a" style="left:843px;top:89px;width:1px;height:1px;background:#8E8C80;box-shadow:1px 1px 0 #FFFFFF"></div><div class="a" style="left:843px;top:92px;width:1px;height:1px;background:#8E8C80;box-shadow:1px 1px 0 #FFFFFF"></div><div class="a" style="left:843px;top:95px;width:1px;height:1px;background:#8E8C80;box-shadow:1px 1px 0 #FFFFFF"></div><div class="a" style="left:843px;top:98px;width:1px;height:1px;background:#8E8C80;box-shadow:1px 1px 0 #FFFFFF"></div>
<svg class="a" style="left:850px;top:88px" width="13" height="12" viewBox="0 0 13 12"><defs><linearGradient id="fg" x1="0" y1="0" x2="0" y2="1"><stop offset="0" stop-color="#FFFFFF"/><stop offset="1" stop-color="#E4E6EA"/></linearGradient></defs><rect x=".5" y="1.5" width="11" height="9" fill="url(#fg)" stroke="#DADDE4" stroke-width=".6"/><path d="M.5 2H11.5" stroke="#3A78E0" stroke-width="1.6"/><path d="M4 2H5.5M8 2H9" stroke="#9CC0F0" stroke-width="1.6"/><path d="M.5 10.5H11.5" stroke="#5A6A80" stroke-width="1" stroke-dasharray="1 .5"/><path d="M10 0V5M7.5 2.5H12.5" stroke="#28A030" stroke-width="1.8"/></svg>
<svg class="a" style="left:869px;top:88px" width="13" height="12" viewBox="0 0 13 12"><rect x="1" y="2" width="3" height="2" fill="#3A78E0"/><rect x="3" y="5" width="5" height="2" fill="#3A78E0"/><rect x="3" y="8" width="5" height="2" fill="#3A78E0"/><rect x="3" y="11" width="5" height="1" fill="#3A78E0"/><path d="M2 4V11H3" stroke="#3A78E0" stroke-width="1" fill="none"/><path d="M10 0V5M7.5 2.5H12.5" stroke="#28A030" stroke-width="1.8"/></svg>
<svg class="a" style="left:889px;top:88px" width="13" height="12" viewBox="0 0 13 12"><defs><linearGradient id="fg" x1="0" y1="0" x2="0" y2="1"><stop offset="0" stop-color="#FFFFFF"/><stop offset="1" stop-color="#E4E6EA"/></linearGradient></defs><rect x=".5" y="1.5" width="11" height="9" fill="url(#fg)" stroke="#DADDE4" stroke-width=".6"/><path d="M.5 2H11.5" stroke="#3A78E0" stroke-width="1.6"/><path d="M4 2H5.5M8 2H9" stroke="#9CC0F0" stroke-width="1.6"/><path d="M.5 10.5H11.5" stroke="#5A6A80" stroke-width="1" stroke-dasharray="1 .5"/><path d="M3 9 L11 1" stroke="#E08030" stroke-width="1.6"/><path d="M3 9 L5 8" stroke="#555" stroke-width="1"/></svg>
<svg class="a" style="left:908px;top:88px" width="13" height="12" viewBox="0 0 13 12"><defs><linearGradient id="fg" x1="0" y1="0" x2="0" y2="1"><stop offset="0" stop-color="#FFFFFF"/><stop offset="1" stop-color="#E4E6EA"/></linearGradient></defs><rect x=".5" y="1.5" width="11" height="9" fill="url(#fg)" stroke="#DADDE4" stroke-width=".6"/><path d="M.5 2H11.5" stroke="#3A78E0" stroke-width="1.6"/><path d="M4 2H5.5M8 2H9" stroke="#9CC0F0" stroke-width="1.6"/><path d="M.5 10.5H11.5" stroke="#5A6A80" stroke-width="1" stroke-dasharray="1 .5"/><path d="M7 6L12 11M12 6L7 11" stroke="#E07030" stroke-width="1.6"/></svg>
<svg class="a" style="left:926px;top:97px" width="5" height="3" viewBox="0 0 5 3"><path d="M0 0H5L2.5 3Z" fill="#000"/></svg>
<div class="a" style="left:838px;top:105px;width:184px;height:309px;background:#fff;border:1px solid #A6BADC"></div>
<div class="a" style="left:839px;top:106px;width:182px;height:14px;background:linear-gradient(#F0EFE4,#E9E7D8);border-bottom:1px solid #D4D0C0"></div>
<div class="a" style="left:960px;top:108px;width:1px;height:11px;background:#D0CCBC"></div>
<div class="a" style="left:996px;top:108px;width:1px;height:11px;background:#D0CCBC"></div>
<div class="t" style="left:964px;top:108px">UnDone</div>
<div class="t" style="left:1000px;top:108px">Total</div>
<div class="a" style="left:846px;top:127px;width:1px;height:44px;border-left:1px dotted #BDB8A6"></div>
<div class="a" style="left:847px;top:128px;width:8px;height:1px;border-top:1px dotted #BDB8A6"></div>
<div class="a" style="left:847px;top:142px;width:8px;height:1px;border-top:1px dotted #BDB8A6"></div>
<div class="a" style="left:847px;top:157px;width:8px;height:1px;border-top:1px dotted #BDB8A6"></div>
<div class="a" style="left:847px;top:171px;width:8px;height:1px;border-top:1px dotted #BDB8A6"></div>
<div class="a" style="left:962px;top:136px;width:59px;height:13px;background:#EDEAD8"></div>
<div class="a" style="left:855px;top:135px;width:167px;height:15px;border:1px solid #333;border-radius:1px"></div>
<svg class="a" style="left:857px;top:121px" width="12" height="14" viewBox="0 0 12 14"><rect x="1" y="2" width="2" height="12" fill="#E2601A"/><rect x="2.5" y="2.5" width="8" height="11" fill="#FAFAFA" stroke="#505860" stroke-width=".8"/><path d="M4 1V4M6.5 1V4M9 1V4" stroke="#A03030" stroke-width="1"/><text x="4.3" y="11.5" font-family="Liberation Sans" font-size="6.5" fill="#404850">$</text></svg>
<div class="t" style="left:872px;top:123px">Maternity Hospital Pacl</div>
<svg class="a" style="left:857px;top:135px" width="12" height="14" viewBox="0 0 12 14"><rect x="1" y="2" width="2" height="12" fill="#E2601A"/><rect x="2.5" y="2.5" width="8" height="11" fill="#FAFAFA" stroke="#505860" stroke-width=".8"/><path d="M4 1V4M6.5 1V4M9 1V4" stroke="#A03030" stroke-width="1"/><text x="4.3" y="11.5" font-family="Liberation Sans" font-size="6.5" fill="#404850">$</text></svg>
<div class="t" style="left:872px;top:137px">For You</div>
<div class="t" style="left:960px;width:35px;text-align:right;top:137px">17</div>
<div class="t" style="left:990px;width:29px;text-align:right;top:137px">17</div>
<svg class="a" style="left:857px;top:150px" width="12" height="14" viewBox="0 0 12 14"><rect x="1" y="2" width="2" height="12" fill="#E2601A"/><rect x="2.5" y="2.5" width="8" height="11" fill="#FAFAFA" stroke="#505860" stroke-width=".8"/><path d="M4 1V4M6.5 1V4M9 1V4" stroke="#A03030" stroke-width="1"/><text x="4.3" y="11.5" font-family="Liberation Sans" font-size="6.5" fill="#404850">$</text></svg>
<div class="t" style="left:872px;top:152px">For Your Partner</div>
<div class="t" style="left:960px;width:35px;text-align:right;top:152px">6</div>
<div class="t" style="left:990px;width:29px;text-align:right;top:152px">6</div>
<svg class="a" style="left:857px;top:164px" width="12" height="14" viewBox="0 0 12 14"><rect x="1" y="2" width="2" height="12" fill="#E2601A"/><rect x="2.5" y="2.5" width="8" height="11" fill="#FAFAFA" stroke="#505860" stroke-width=".8"/><path d="M4 1V4M6.5 1V4M9 1V4" stroke="#A03030" stroke-width="1"/><text x="4.3" y="11.5" font-family="Liberation Sans" font-size="6.5" fill="#404850">$</text></svg>
<div class="t" style="left:872px;top:166px">For Your Baby</div>
<div class="t" style="left:960px;width:35px;text-align:right;top:166px">9</div>
<div class="t" style="left:990px;width:29px;text-align:right;top:166px">9</div>
<div class="a" style="left:839px;top:419px;width:183px;height:16px;background:linear-gradient(#FCFBF8,#F3F2EB);border:1px solid #DCD8C8;border-radius:4px"></div><div class="t" style="left:841px;top:422px;color:#111">Filters Bar</div>
<svg class="a" style="left:983px;top:421px" width="10" height="10" viewBox="0 0 10 10"><rect x=".5" y=".5" width="9" height="9" rx="1.5" fill="#2A6AE0" stroke="#1A4AB0" stroke-width=".7"/><rect x="3" y="3" width="4" height="4" fill="#fff" opacity=".85"/><rect x="4" y="4" width="2" height="2" fill="#2A6AE0"/></svg>
<svg class="a" style="left:997px;top:421px" width="9" height="10" viewBox="0 0 9 10"><path d="M1.5 1H7.5M3 1V5M6 1V5M0.5 5.5H8.5M4.5 5.5V10" stroke="#1E56C8" stroke-width="1.3" fill="none"/></svg>
<svg class="a" style="left:1009px;top:421px" width="10" height="10" viewBox="0 0 10 10"><rect width="10" height="10" fill="#E06A20"/><rect x=".5" y=".5" width="9" height="9" fill="none" stroke="#F09050" stroke-width=".6"/><path d="M2.5 2.5L7.5 7.5M7.5 2.5L2.5 7.5" stroke="#fff" stroke-width="1.8"/></svg>
<div class="a" style="left:838px;top:435px;width:184px;height:24px;background:linear-gradient(#F4F3EC,#EDEBE1 60%,#E5E2D4)"></div>
<div class="a" style="left:843px;top:441px;width:1px;height:1px;background:#8E8C80;box-shadow:1px 1px 0 #FFFFFF"></div><div class="a" style="left:843px;top:444px;width:1px;height:1px;background:#8E8C80;box-shadow:1px 1px 0 #FFFFFF"></div><div class="a" style="left:843px;top:447px;width:1px;height:1px;background:#8E8C80;box-shadow:1px 1px 0 #FFFFFF"></div><div class="a" style="left:843px;top:450px;width:1px;height:1px;background:#8E8C80;box-shadow:1px 1px 0 #FFFFFF"></div><div class="a" style="left:843px;top:453px;width:1px;height:1px;background:#8E8C80;box-shadow:1px 1px 0 #FFFFFF"></div>
<div class="a" style="left:846px;top:440px;width:75px;height:16px;background:#EEEDE6;border:1px solid #8FAAD8"></div>
<div class="t" style="left:849px;top:443px;color:#AEACA4">Custom</div>
<div class="a" style="left:907px;top:441px;width:13px;height:14px;background:#E4E2DA"></div>
<svg class="a" style="left:910px;top:446px" width="7" height="5" viewBox="0 0 7 5"><path d="M0.5 0.5L3.5 3.5L6.5 0.5" stroke="#B8B6AE" stroke-width="1.2" fill="none"/></svg>
<svg class="a" style="left:924px;top:442px" width="14" height="13" viewBox="0 0 14 13"><rect x="6.5" y=".5" width="6" height="8.5" fill="#F2F5FA" stroke="#A8B8D8" stroke-width=".7"/><path d="M1.5 6V10Q1.5 12.5 4.5 12.5" stroke="#5A80C8" stroke-width="1.7" fill="none"/><path d="M4 11L9.5 5.5" stroke="#3AAA40" stroke-width="2.6"/><path d="M7 3.5H11.5V8Z" fill="#3AAA40"/></svg>
<svg class="a" style="left:938px;top:446px" width="5" height="3" viewBox="0 0 5 3"><path d="M0 0H5L2.5 3Z" fill="#000"/></svg>
<svg class="a" style="left:950px;top:442px" width="13" height="12" viewBox="0 0 13 12"><path d="M1 9 L7 2 Q8.5 1 10 2 L12 4 Q12.5 5.5 11 7 L6 11.5 H2.5Z" fill="#F2F2F0" stroke="#9A9A94" stroke-width=".9"/><path d="M6 11.5H12" stroke="#9A9A94" stroke-width="1"/></svg>
<svg class="a" style="left:971px;top:443px" width="11" height="11" viewBox="0 0 11 11"><path d="M1.5 1.5L9.5 9.5M9.5 1.5L1.5 9.5" stroke="#B4B2AA" stroke-width="2.2"/></svg>
<svg class="a" style="left:988px;top:452px" width="5" height="3" viewBox="0 0 5 3"><path d="M0 0H5L2.5 3Z" fill="#000"/></svg>
<div class="a" style="left:839px;top:459px;width:183px;height:153px;background:#ECE9D8;border:1px solid #A6BADC;border-bottom-color:#9E9A88;border-left-color:#9A9684"></div>
<div class="a" style="left:918px;top:460px;width:1px;height:151px;background:#C2BEAE"></div>
<div class="t" style="left:852px;top:463px;width:65px;overflow:hidden">Completion</div>
<div class="a" style="left:840px;top:476px;width:181px;height:1px;border-top:1px dotted #C8C2B0"></div>
<div class="a" style="left:1007px;top:462px;width:12px;height:13px;background:linear-gradient(#D2E0FA,#B8CCF2);border-radius:1px"></div>
<svg class="a" style="left:1009px;top:467px" width="7" height="5" viewBox="0 0 7 5"><path d="M0.5 0.5L3.5 3.5L6.5 0.5" stroke="#4D6185" stroke-width="1.3" fill="none"/></svg>
<div class="t" style="left:852px;top:480px;width:65px;overflow:hidden">Due Date</div>
<div class="a" style="left:840px;top:493px;width:181px;height:1px;border-top:1px dotted #C8C2B0"></div>
<div class="a" style="left:1007px;top:479px;width:12px;height:13px;background:linear-gradient(#D2E0FA,#B8CCF2);border-radius:1px"></div>
<svg class="a" style="left:1009px;top:484px" width="7" height="5" viewBox="0 0 7 5"><path d="M0.5 0.5L3.5 3.5L6.5 0.5" stroke="#4D6185" stroke-width="1.3" fill="none"/></svg>
<div class="t" style="left:852px;top:497px;width:65px;overflow:hidden">Status</div>
<div class="a" style="left:840px;top:510px;width:181px;height:1px;border-top:1px dotted #C8C2B0"></div>
<div class="a" style="left:1007px;top:496px;width:12px;height:13px;background:linear-gradient(#D2E0FA,#B8CCF2);border-radius:1px"></div>
<svg class="a" style="left:1009px;top:501px" width="7" height="5" viewBox="0 0 7 5"><path d="M0.5 0.5L3.5 3.5L6.5 0.5" stroke="#4D6185" stroke-width="1.3" fill="none"/></svg>
<div class="t" style="left:852px;top:513px;width:65px;overflow:hidden">Priority</div>
<div class="a" style="left:840px;top:526px;width:181px;height:1px;border-top:1px dotted #C8C2B0"></div>
<div class="a" style="left:1007px;top:512px;width:12px;height:13px;background:linear-gradient(#D2E0FA,#B8CCF2);border-radius:1px"></div>
<svg class="a" style="left:1009px;top:517px" width="7" height="5" viewBox="0 0 7 5"><path d="M0.5 0.5L3.5 3.5L6.5 0.5" stroke="#4D6185" stroke-width="1.3" fill="none"/></svg>
<div class="t" style="left:852px;top:530px;width:65px;overflow:hidden">Task Name</div>
<div class="a" style="left:840px;top:543px;width:181px;height:1px;border-top:1px dotted #C8C2B0"></div>
<div class="t" style="left:852px;top:547px;width:65px;overflow:hidden">Date Created</div>
<div class="a" style="left:840px;top:560px;width:181px;height:1px;border-top:1px dotted #C8C2B0"></div>
<div class="a" style="left:1007px;top:546px;width:12px;height:13px;background:linear-gradient(#D2E0FA,#B8CCF2);border-radius:1px"></div>
<svg class="a" style="left:1009px;top:551px" width="7" height="5" viewBox="0 0 7 5"><path d="M0.5 0.5L3.5 3.5L6.5 0.5" stroke="#4D6185" stroke-width="1.3" fill="none"/></svg>
<div class="t" style="left:852px;top:564px;width:65px;overflow:hidden">Date Last Modifi</div>
<div class="a" style="left:840px;top:577px;width:181px;height:1px;border-top:1px dotted #C8C2B0"></div>
<div class="a" style="left:1007px;top:563px;width:12px;height:13px;background:linear-gradient(#D2E0FA,#B8CCF2);border-radius:1px"></div>
<svg class="a" style="left:1009px;top:568px" width="7" height="5" viewBox="0 0 7 5"><path d="M0.5 0.5L3.5 3.5L6.5 0.5" stroke="#4D6185" stroke-width="1.3" fill="none"/></svg>
<div class="t" style="left:852px;top:581px;width:65px;overflow:hidden">Date Opened</div>
<div class="a" style="left:840px;top:594px;width:181px;height:1px;border-top:1px dotted #C8C2B0"></div>
<div class="a" style="left:1007px;top:580px;width:12px;height:13px;background:linear-gradient(#D2E0FA,#B8CCF2);border-radius:1px"></div>
<svg class="a" style="left:1009px;top:585px" width="7" height="5" viewBox="0 0 7 5"><path d="M0.5 0.5L3.5 3.5L6.5 0.5" stroke="#4D6185" stroke-width="1.3" fill="none"/></svg>
<div class="t" style="left:852px;top:597px;width:65px;overflow:hidden">Date Completed</div>
<div class="a" style="left:1007px;top:596px;width:12px;height:13px;background:linear-gradient(#D2E0FA,#B8CCF2);border-radius:1px"></div>
<svg class="a" style="left:1009px;top:601px" width="7" height="5" viewBox="0 0 7 5"><path d="M0.5 0.5L3.5 3.5L6.5 0.5" stroke="#4D6185" stroke-width="1.3" fill="none"/></svg>
<div class="a" style="left:0;top:779px;width:1024px;height:16px;background:linear-gradient(#E8E5D6,#ECE9D9)"></div>
<div class="a" style="left:0;top:778px;width:1024px;height:1px;background:#B4B0A0"></div>
<div class="a" style="left:0;top:779px;width:1024px;height:1px;background:#DCD9CA"></div>
</body></html>
